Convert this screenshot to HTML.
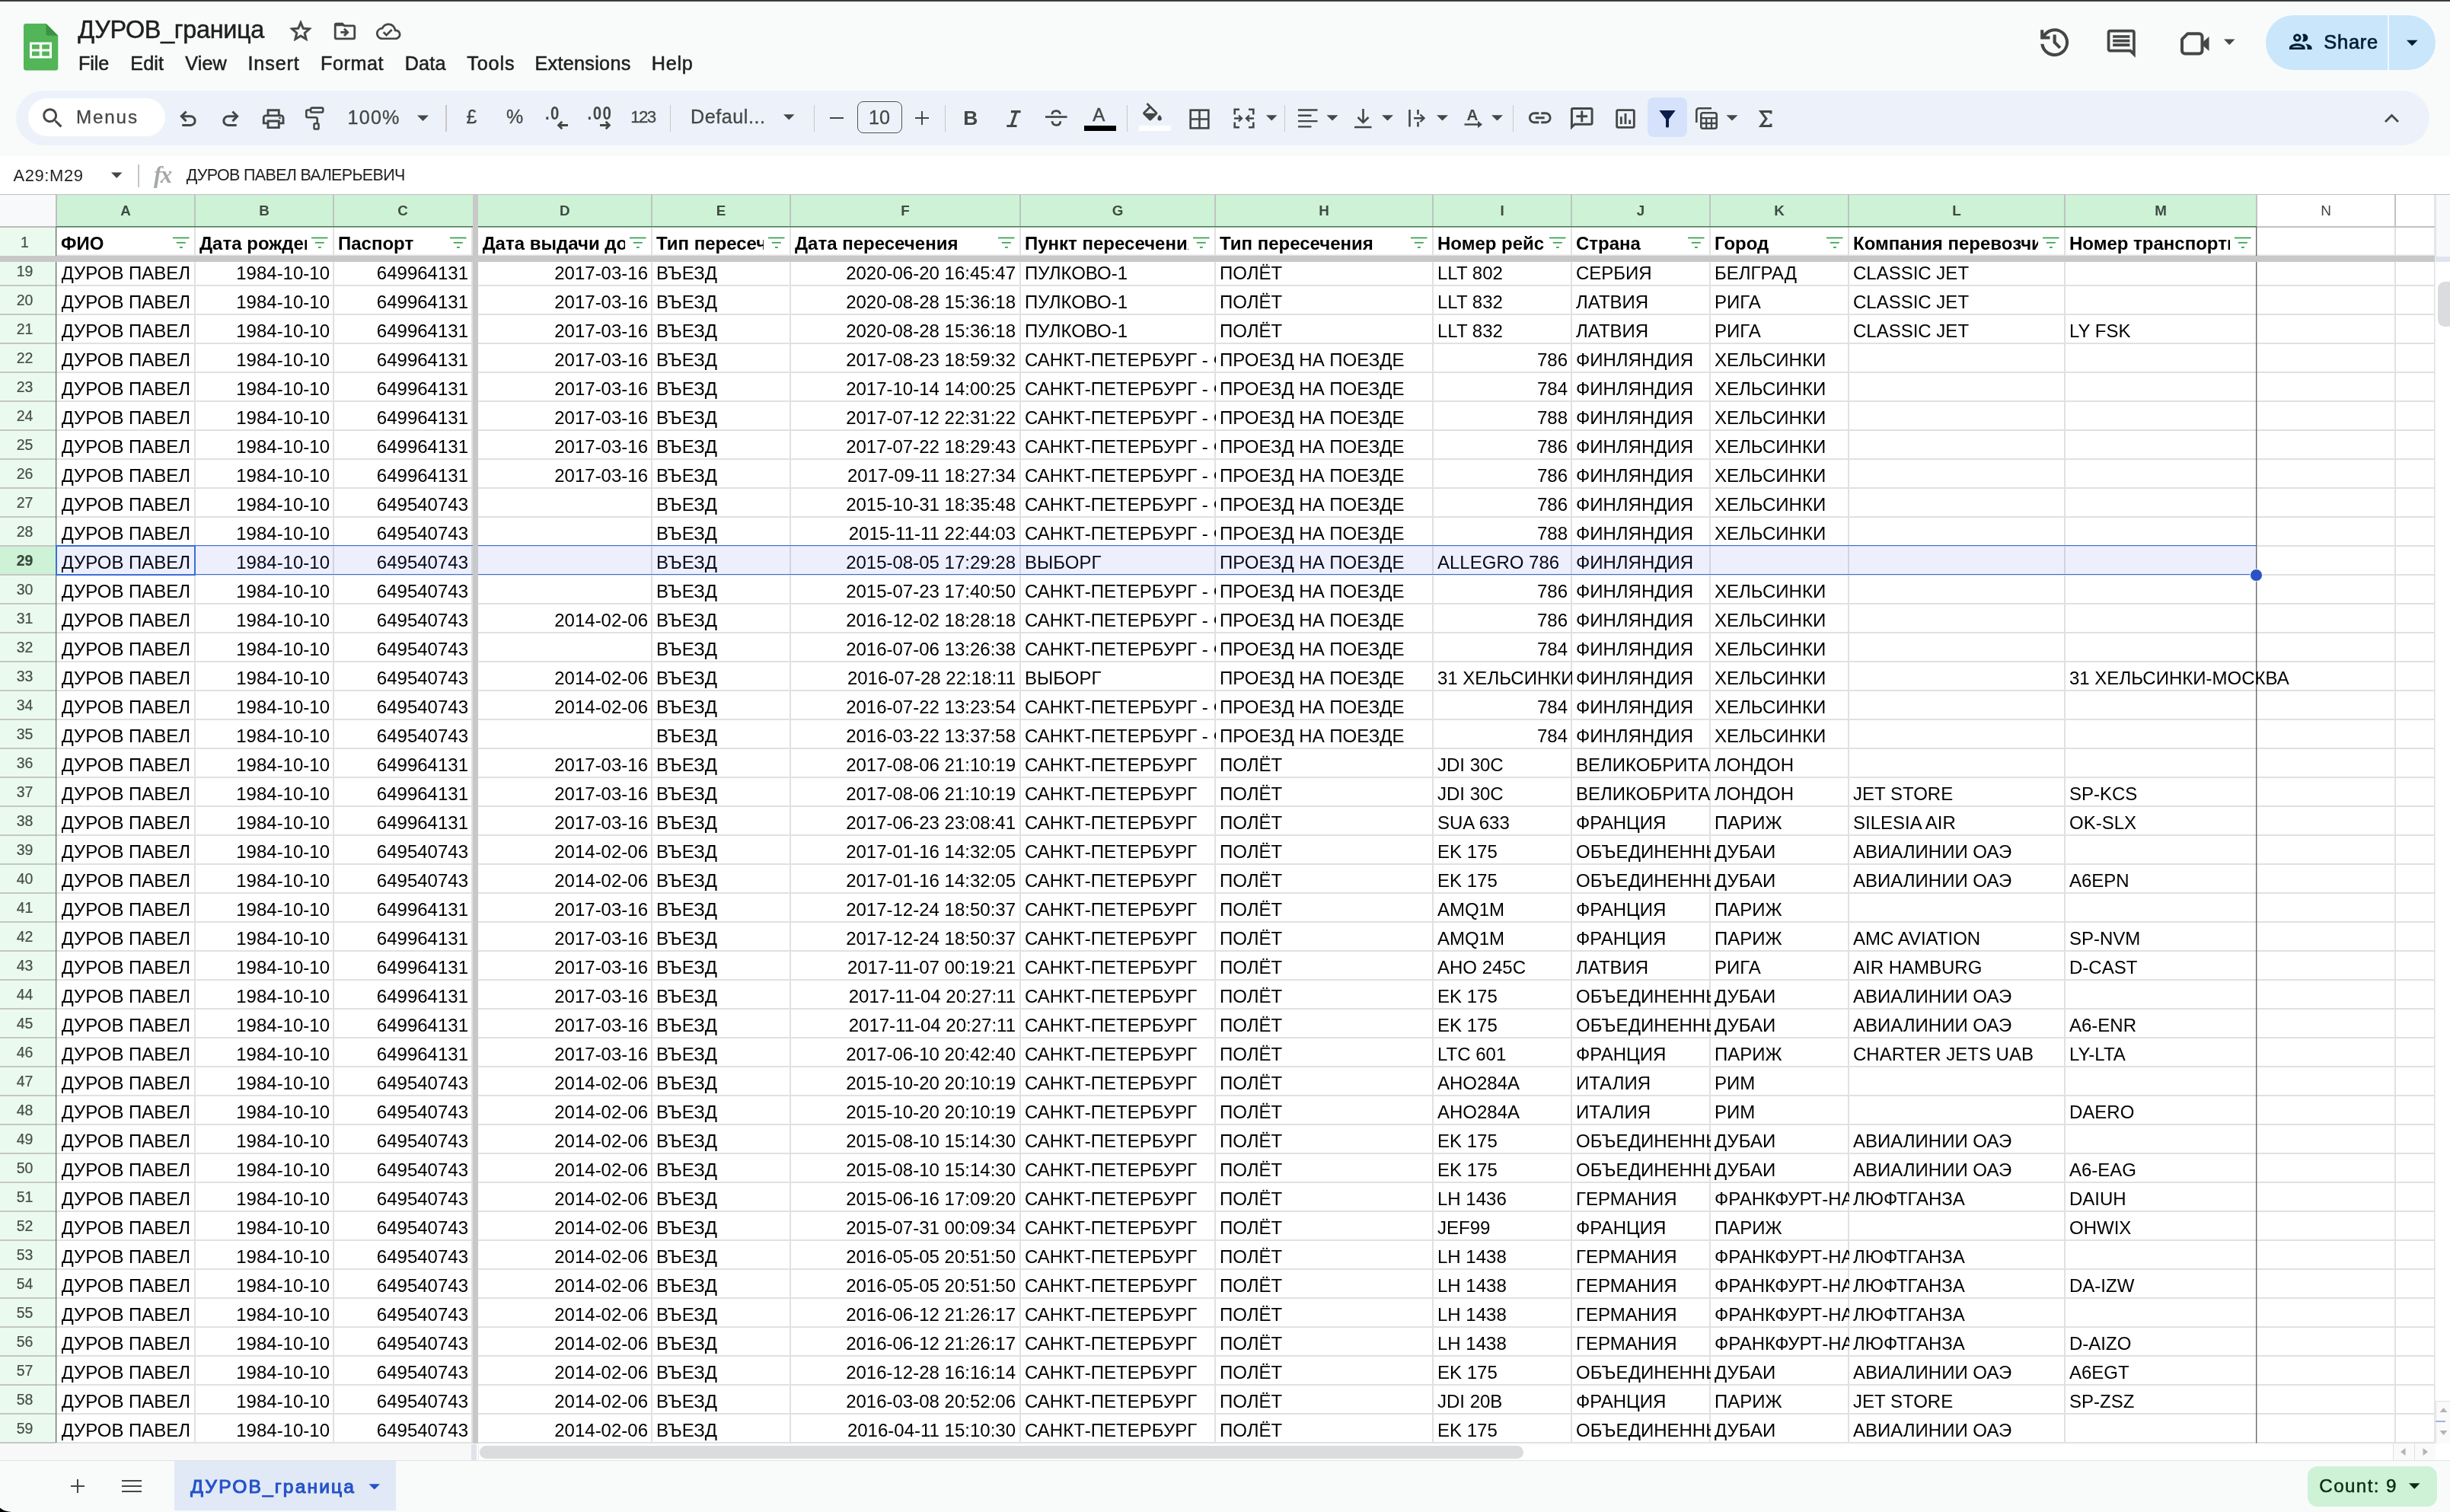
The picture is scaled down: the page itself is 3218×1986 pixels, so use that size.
<!DOCTYPE html><html><head><meta charset='utf-8'><title>ДУРОВ_граница - Google Sheets</title><style>
*{box-sizing:border-box;margin:0;padding:0}
html,body{width:3218px;height:1986px;overflow:hidden;background:#f9fbfb;font-family:"Liberation Sans",sans-serif;}
body{position:relative}
#root{position:absolute;left:0;top:0;width:3218px;height:1986px;overflow:hidden;will-change:transform}
.a{position:absolute}
.t{position:absolute;white-space:pre;line-height:1;}
.c{position:absolute;white-space:pre;overflow:hidden;font-size:24.0px;color:#000;height:36px;line-height:36px}
.r{text-align:right}
.rh{position:absolute;left:0;width:65px;text-align:center;font-size:19.5px;color:#444f46;height:36px;line-height:36px;-webkit-text-stroke:0.2px #444f46}
.ch{position:absolute;top:256.3px;height:41px;line-height:41px;text-align:center;font-size:18.8px;font-weight:bold;color:#3f4a42;}
.h1{position:absolute;white-space:pre;overflow:hidden;font-size:24.0px;font-weight:bold;color:#000;height:34px;line-height:34px;top:302.6px}
svg{position:absolute;overflow:visible}
</style></head><body><div id='root'>
<div class='a' style='left:0;top:205px;width:3218px;height:50px;background:#fff'></div>
<div class='a' style='left:0;top:255px;width:3198px;height:1640px;background:#fff'></div>
<div class='a' style='left:0;top:256px;width:73px;height:41px;background:#f8f9fa'></div>
<div class='a' style='left:75px;top:256px;width:2889px;height:41.5px;background:#cdf2d5'></div>
<div class='a' style='left:0;top:299px;width:73.5px;height:1596px;background:#ebfaef'></div>
<div class='a' style='left:0;top:717px;width:73.5px;height:38px;background:#cdf2d5'></div>
<svg class='a' style='left:0;top:0' width='3218' height='1986'><rect x='74' y='374' width='3124' height='2' fill='#e1e1e1'/><rect x='0' y='374' width='73' height='2' fill='#c4c7c5'/><rect x='74' y='412' width='3124' height='2' fill='#e1e1e1'/><rect x='0' y='412' width='73' height='2' fill='#c4c7c5'/><rect x='74' y='450' width='3124' height='2' fill='#e1e1e1'/><rect x='0' y='450' width='73' height='2' fill='#c4c7c5'/><rect x='74' y='488' width='3124' height='2' fill='#e1e1e1'/><rect x='0' y='488' width='73' height='2' fill='#c4c7c5'/><rect x='74' y='526' width='3124' height='2' fill='#e1e1e1'/><rect x='0' y='526' width='73' height='2' fill='#c4c7c5'/><rect x='74' y='564' width='3124' height='2' fill='#e1e1e1'/><rect x='0' y='564' width='73' height='2' fill='#c4c7c5'/><rect x='74' y='602' width='3124' height='2' fill='#e1e1e1'/><rect x='0' y='602' width='73' height='2' fill='#c4c7c5'/><rect x='74' y='640' width='3124' height='2' fill='#e1e1e1'/><rect x='0' y='640' width='73' height='2' fill='#c4c7c5'/><rect x='74' y='678' width='3124' height='2' fill='#e1e1e1'/><rect x='0' y='678' width='73' height='2' fill='#c4c7c5'/><rect x='74' y='716' width='3124' height='2' fill='#e1e1e1'/><rect x='0' y='716' width='73' height='2' fill='#c4c7c5'/><rect x='74' y='754' width='3124' height='2' fill='#e1e1e1'/><rect x='0' y='754' width='73' height='2' fill='#c4c7c5'/><rect x='74' y='792' width='3124' height='2' fill='#e1e1e1'/><rect x='0' y='792' width='73' height='2' fill='#c4c7c5'/><rect x='74' y='830' width='3124' height='2' fill='#e1e1e1'/><rect x='0' y='830' width='73' height='2' fill='#c4c7c5'/><rect x='74' y='868' width='3124' height='2' fill='#e1e1e1'/><rect x='0' y='868' width='73' height='2' fill='#c4c7c5'/><rect x='74' y='906' width='3124' height='2' fill='#e1e1e1'/><rect x='0' y='906' width='73' height='2' fill='#c4c7c5'/><rect x='74' y='944' width='3124' height='2' fill='#e1e1e1'/><rect x='0' y='944' width='73' height='2' fill='#c4c7c5'/><rect x='74' y='982' width='3124' height='2' fill='#e1e1e1'/><rect x='0' y='982' width='73' height='2' fill='#c4c7c5'/><rect x='74' y='1020' width='3124' height='2' fill='#e1e1e1'/><rect x='0' y='1020' width='73' height='2' fill='#c4c7c5'/><rect x='74' y='1058' width='3124' height='2' fill='#e1e1e1'/><rect x='0' y='1058' width='73' height='2' fill='#c4c7c5'/><rect x='74' y='1096' width='3124' height='2' fill='#e1e1e1'/><rect x='0' y='1096' width='73' height='2' fill='#c4c7c5'/><rect x='74' y='1134' width='3124' height='2' fill='#e1e1e1'/><rect x='0' y='1134' width='73' height='2' fill='#c4c7c5'/><rect x='74' y='1172' width='3124' height='2' fill='#e1e1e1'/><rect x='0' y='1172' width='73' height='2' fill='#c4c7c5'/><rect x='74' y='1210' width='3124' height='2' fill='#e1e1e1'/><rect x='0' y='1210' width='73' height='2' fill='#c4c7c5'/><rect x='74' y='1248' width='3124' height='2' fill='#e1e1e1'/><rect x='0' y='1248' width='73' height='2' fill='#c4c7c5'/><rect x='74' y='1286' width='3124' height='2' fill='#e1e1e1'/><rect x='0' y='1286' width='73' height='2' fill='#c4c7c5'/><rect x='74' y='1324' width='3124' height='2' fill='#e1e1e1'/><rect x='0' y='1324' width='73' height='2' fill='#c4c7c5'/><rect x='74' y='1362' width='3124' height='2' fill='#e1e1e1'/><rect x='0' y='1362' width='73' height='2' fill='#c4c7c5'/><rect x='74' y='1400' width='3124' height='2' fill='#e1e1e1'/><rect x='0' y='1400' width='73' height='2' fill='#c4c7c5'/><rect x='74' y='1438' width='3124' height='2' fill='#e1e1e1'/><rect x='0' y='1438' width='73' height='2' fill='#c4c7c5'/><rect x='74' y='1476' width='3124' height='2' fill='#e1e1e1'/><rect x='0' y='1476' width='73' height='2' fill='#c4c7c5'/><rect x='74' y='1514' width='3124' height='2' fill='#e1e1e1'/><rect x='0' y='1514' width='73' height='2' fill='#c4c7c5'/><rect x='74' y='1552' width='3124' height='2' fill='#e1e1e1'/><rect x='0' y='1552' width='73' height='2' fill='#c4c7c5'/><rect x='74' y='1590' width='3124' height='2' fill='#e1e1e1'/><rect x='0' y='1590' width='73' height='2' fill='#c4c7c5'/><rect x='74' y='1628' width='3124' height='2' fill='#e1e1e1'/><rect x='0' y='1628' width='73' height='2' fill='#c4c7c5'/><rect x='74' y='1666' width='3124' height='2' fill='#e1e1e1'/><rect x='0' y='1666' width='73' height='2' fill='#c4c7c5'/><rect x='74' y='1704' width='3124' height='2' fill='#e1e1e1'/><rect x='0' y='1704' width='73' height='2' fill='#c4c7c5'/><rect x='74' y='1742' width='3124' height='2' fill='#e1e1e1'/><rect x='0' y='1742' width='73' height='2' fill='#c4c7c5'/><rect x='74' y='1780' width='3124' height='2' fill='#e1e1e1'/><rect x='0' y='1780' width='73' height='2' fill='#c4c7c5'/><rect x='74' y='1818' width='3124' height='2' fill='#e1e1e1'/><rect x='0' y='1818' width='73' height='2' fill='#c4c7c5'/><rect x='74' y='1856' width='3124' height='2' fill='#e1e1e1'/><rect x='0' y='1856' width='73' height='2' fill='#c4c7c5'/><rect x='74' y='1894' width='3124' height='2' fill='#e1e1e1'/><rect x='0' y='1894' width='73' height='2' fill='#c4c7c5'/><rect x='74' y='334.5' width='3124' height='1.5' fill='#e1e1e1'/><rect x='255' y='299' width='2' height='1597' fill='#e1e1e1'/><rect x='437' y='299' width='2' height='1597' fill='#e1e1e1'/><rect x='619' y='299' width='2' height='1597' fill='#e1e1e1'/><rect x='855' y='299' width='2' height='1597' fill='#e1e1e1'/><rect x='1037' y='299' width='2' height='1597' fill='#e1e1e1'/><rect x='1339' y='299' width='2' height='1597' fill='#e1e1e1'/><rect x='1595' y='299' width='2' height='1597' fill='#e1e1e1'/><rect x='1881' y='299' width='2' height='1597' fill='#e1e1e1'/><rect x='2063' y='299' width='2' height='1597' fill='#e1e1e1'/><rect x='2245' y='299' width='2' height='1597' fill='#e1e1e1'/><rect x='2427' y='299' width='2' height='1597' fill='#e1e1e1'/><rect x='2711' y='299' width='2' height='1597' fill='#e1e1e1'/><rect x='3145' y='299' width='2' height='1597' fill='#e1e1e1'/><rect x='3197' y='256' width='1.5' height='1640' fill='#e1e1e1'/><rect x='255' y='256' width='2' height='42' fill='#c0c3c1'/><rect x='437' y='256' width='2' height='42' fill='#c0c3c1'/><rect x='855' y='256' width='2' height='42' fill='#c0c3c1'/><rect x='1037' y='256' width='2' height='42' fill='#c0c3c1'/><rect x='1339' y='256' width='2' height='42' fill='#c0c3c1'/><rect x='1595' y='256' width='2' height='42' fill='#c0c3c1'/><rect x='1881' y='256' width='2' height='42' fill='#c0c3c1'/><rect x='2063' y='256' width='2' height='42' fill='#c0c3c1'/><rect x='2245' y='256' width='2' height='42' fill='#c0c3c1'/><rect x='2427' y='256' width='2' height='42' fill='#c0c3c1'/><rect x='2711' y='256' width='2' height='42' fill='#c0c3c1'/><rect x='2963' y='256' width='2' height='42' fill='#c0c3c1'/><rect x='3145' y='256' width='2' height='42' fill='#c0c3c1'/><rect x='0' y='255' width='3218' height='1' fill='#c0c0c0'/><rect x='73' y='256' width='2' height='42' fill='#c0c0c0'/><rect x='0' y='297' width='74' height='2' fill='#bcbcbc'/><rect x='74' y='297' width='2890' height='1.6' fill='#4f7b5a'/><rect x='2964' y='297' width='234' height='2' fill='#c0c3c1'/><rect x='73' y='298' width='1.3' height='1597' fill='#5b7463'/><rect x='2963.1' y='298' width='1.25' height='1597.5' fill='#5a5a5a'/></svg>
<div class='c' style='left:80.5px;width:176.5px;top:340.5px'>ДУРОВ ПАВЕЛ ВАЛЕРЬЕВИЧ</div>
<div class='c r' style='left:257px;width:176.0px;top:340.5px'>1984-10-10</div>
<div class='c r' style='left:439px;width:176.0px;top:340.5px'>649964131</div>
<div class='c r' style='left:628.5px;width:222.5px;top:340.5px'>2017-03-16</div>
<div class='c' style='left:862.0px;width:177.0px;top:340.5px'>ВЪЕЗД</div>
<div class='c r' style='left:1039px;width:295.0px;top:340.5px'>2020-06-20 16:45:47</div>
<div class='c' style='left:1346.0px;width:251.0px;top:340.5px'>ПУЛКОВО-1</div>
<div class='c' style='left:1602.0px;width:281.0px;top:340.5px'>ПОЛЁТ</div>
<div class='c' style='left:1888.0px;width:177.0px;top:340.5px'>LLT 802</div>
<div class='c' style='left:2070.0px;width:177.0px;top:340.5px'>СЕРБИЯ</div>
<div class='c' style='left:2252.0px;width:177.0px;top:340.5px'>БЕЛГРАД</div>
<div class='c' style='left:2434.0px;width:279.0px;top:340.5px'>CLASSIC JET</div>
<div class='rh' style='top:338.2px;'>19</div>
<div class='c' style='left:80.5px;width:176.5px;top:378.5px'>ДУРОВ ПАВЕЛ ВАЛЕРЬЕВИЧ</div>
<div class='c r' style='left:257px;width:176.0px;top:378.5px'>1984-10-10</div>
<div class='c r' style='left:439px;width:176.0px;top:378.5px'>649964131</div>
<div class='c r' style='left:628.5px;width:222.5px;top:378.5px'>2017-03-16</div>
<div class='c' style='left:862.0px;width:177.0px;top:378.5px'>ВЪЕЗД</div>
<div class='c r' style='left:1039px;width:295.0px;top:378.5px'>2020-08-28 15:36:18</div>
<div class='c' style='left:1346.0px;width:251.0px;top:378.5px'>ПУЛКОВО-1</div>
<div class='c' style='left:1602.0px;width:281.0px;top:378.5px'>ПОЛЁТ</div>
<div class='c' style='left:1888.0px;width:177.0px;top:378.5px'>LLT 832</div>
<div class='c' style='left:2070.0px;width:177.0px;top:378.5px'>ЛАТВИЯ</div>
<div class='c' style='left:2252.0px;width:177.0px;top:378.5px'>РИГА</div>
<div class='c' style='left:2434.0px;width:279.0px;top:378.5px'>CLASSIC JET</div>
<div class='rh' style='top:376.2px;'>20</div>
<div class='c' style='left:80.5px;width:176.5px;top:416.5px'>ДУРОВ ПАВЕЛ ВАЛЕРЬЕВИЧ</div>
<div class='c r' style='left:257px;width:176.0px;top:416.5px'>1984-10-10</div>
<div class='c r' style='left:439px;width:176.0px;top:416.5px'>649964131</div>
<div class='c r' style='left:628.5px;width:222.5px;top:416.5px'>2017-03-16</div>
<div class='c' style='left:862.0px;width:177.0px;top:416.5px'>ВЪЕЗД</div>
<div class='c r' style='left:1039px;width:295.0px;top:416.5px'>2020-08-28 15:36:18</div>
<div class='c' style='left:1346.0px;width:251.0px;top:416.5px'>ПУЛКОВО-1</div>
<div class='c' style='left:1602.0px;width:281.0px;top:416.5px'>ПОЛЁТ</div>
<div class='c' style='left:1888.0px;width:177.0px;top:416.5px'>LLT 832</div>
<div class='c' style='left:2070.0px;width:177.0px;top:416.5px'>ЛАТВИЯ</div>
<div class='c' style='left:2252.0px;width:177.0px;top:416.5px'>РИГА</div>
<div class='c' style='left:2434.0px;width:279.0px;top:416.5px'>CLASSIC JET</div>
<div class='c' style='left:2718.0px;width:247.0px;top:416.5px'>LY FSK</div>
<div class='rh' style='top:414.2px;'>21</div>
<div class='c' style='left:80.5px;width:176.5px;top:454.5px'>ДУРОВ ПАВЕЛ ВАЛЕРЬЕВИЧ</div>
<div class='c r' style='left:257px;width:176.0px;top:454.5px'>1984-10-10</div>
<div class='c r' style='left:439px;width:176.0px;top:454.5px'>649964131</div>
<div class='c r' style='left:628.5px;width:222.5px;top:454.5px'>2017-03-16</div>
<div class='c' style='left:862.0px;width:177.0px;top:454.5px'>ВЪЕЗД</div>
<div class='c r' style='left:1039px;width:295.0px;top:454.5px'>2017-08-23 18:59:32</div>
<div class='c' style='left:1346.0px;width:251.0px;top:454.5px'>САНКТ-ПЕТЕРБУРГ - ФИНЛЯНДСКИЙ</div>
<div class='c' style='left:1602.0px;width:281.0px;top:454.5px'>ПРОЕЗД НА ПОЕЗДЕ</div>
<div class='c r' style='left:1883px;width:176.0px;top:454.5px'>786</div>
<div class='c' style='left:2070.0px;width:177.0px;top:454.5px'>ФИНЛЯНДИЯ</div>
<div class='c' style='left:2252.0px;width:177.0px;top:454.5px'>ХЕЛЬСИНКИ</div>
<div class='rh' style='top:452.2px;'>22</div>
<div class='c' style='left:80.5px;width:176.5px;top:492.5px'>ДУРОВ ПАВЕЛ ВАЛЕРЬЕВИЧ</div>
<div class='c r' style='left:257px;width:176.0px;top:492.5px'>1984-10-10</div>
<div class='c r' style='left:439px;width:176.0px;top:492.5px'>649964131</div>
<div class='c r' style='left:628.5px;width:222.5px;top:492.5px'>2017-03-16</div>
<div class='c' style='left:862.0px;width:177.0px;top:492.5px'>ВЪЕЗД</div>
<div class='c r' style='left:1039px;width:295.0px;top:492.5px'>2017-10-14 14:00:25</div>
<div class='c' style='left:1346.0px;width:251.0px;top:492.5px'>САНКТ-ПЕТЕРБУРГ - ФИНЛЯНДСКИЙ</div>
<div class='c' style='left:1602.0px;width:281.0px;top:492.5px'>ПРОЕЗД НА ПОЕЗДЕ</div>
<div class='c r' style='left:1883px;width:176.0px;top:492.5px'>784</div>
<div class='c' style='left:2070.0px;width:177.0px;top:492.5px'>ФИНЛЯНДИЯ</div>
<div class='c' style='left:2252.0px;width:177.0px;top:492.5px'>ХЕЛЬСИНКИ</div>
<div class='rh' style='top:490.2px;'>23</div>
<div class='c' style='left:80.5px;width:176.5px;top:530.5px'>ДУРОВ ПАВЕЛ ВАЛЕРЬЕВИЧ</div>
<div class='c r' style='left:257px;width:176.0px;top:530.5px'>1984-10-10</div>
<div class='c r' style='left:439px;width:176.0px;top:530.5px'>649964131</div>
<div class='c r' style='left:628.5px;width:222.5px;top:530.5px'>2017-03-16</div>
<div class='c' style='left:862.0px;width:177.0px;top:530.5px'>ВЪЕЗД</div>
<div class='c r' style='left:1039px;width:295.0px;top:530.5px'>2017-07-12 22:31:22</div>
<div class='c' style='left:1346.0px;width:251.0px;top:530.5px'>САНКТ-ПЕТЕРБУРГ - ФИНЛЯНДСКИЙ</div>
<div class='c' style='left:1602.0px;width:281.0px;top:530.5px'>ПРОЕЗД НА ПОЕЗДЕ</div>
<div class='c r' style='left:1883px;width:176.0px;top:530.5px'>788</div>
<div class='c' style='left:2070.0px;width:177.0px;top:530.5px'>ФИНЛЯНДИЯ</div>
<div class='c' style='left:2252.0px;width:177.0px;top:530.5px'>ХЕЛЬСИНКИ</div>
<div class='rh' style='top:528.2px;'>24</div>
<div class='c' style='left:80.5px;width:176.5px;top:568.5px'>ДУРОВ ПАВЕЛ ВАЛЕРЬЕВИЧ</div>
<div class='c r' style='left:257px;width:176.0px;top:568.5px'>1984-10-10</div>
<div class='c r' style='left:439px;width:176.0px;top:568.5px'>649964131</div>
<div class='c r' style='left:628.5px;width:222.5px;top:568.5px'>2017-03-16</div>
<div class='c' style='left:862.0px;width:177.0px;top:568.5px'>ВЪЕЗД</div>
<div class='c r' style='left:1039px;width:295.0px;top:568.5px'>2017-07-22 18:29:43</div>
<div class='c' style='left:1346.0px;width:251.0px;top:568.5px'>САНКТ-ПЕТЕРБУРГ - ФИНЛЯНДСКИЙ</div>
<div class='c' style='left:1602.0px;width:281.0px;top:568.5px'>ПРОЕЗД НА ПОЕЗДЕ</div>
<div class='c r' style='left:1883px;width:176.0px;top:568.5px'>786</div>
<div class='c' style='left:2070.0px;width:177.0px;top:568.5px'>ФИНЛЯНДИЯ</div>
<div class='c' style='left:2252.0px;width:177.0px;top:568.5px'>ХЕЛЬСИНКИ</div>
<div class='rh' style='top:566.2px;'>25</div>
<div class='c' style='left:80.5px;width:176.5px;top:606.5px'>ДУРОВ ПАВЕЛ ВАЛЕРЬЕВИЧ</div>
<div class='c r' style='left:257px;width:176.0px;top:606.5px'>1984-10-10</div>
<div class='c r' style='left:439px;width:176.0px;top:606.5px'>649964131</div>
<div class='c r' style='left:628.5px;width:222.5px;top:606.5px'>2017-03-16</div>
<div class='c' style='left:862.0px;width:177.0px;top:606.5px'>ВЪЕЗД</div>
<div class='c r' style='left:1039px;width:295.0px;top:606.5px'>2017-09-11 18:27:34</div>
<div class='c' style='left:1346.0px;width:251.0px;top:606.5px'>САНКТ-ПЕТЕРБУРГ - ФИНЛЯНДСКИЙ</div>
<div class='c' style='left:1602.0px;width:281.0px;top:606.5px'>ПРОЕЗД НА ПОЕЗДЕ</div>
<div class='c r' style='left:1883px;width:176.0px;top:606.5px'>786</div>
<div class='c' style='left:2070.0px;width:177.0px;top:606.5px'>ФИНЛЯНДИЯ</div>
<div class='c' style='left:2252.0px;width:177.0px;top:606.5px'>ХЕЛЬСИНКИ</div>
<div class='rh' style='top:604.2px;'>26</div>
<div class='c' style='left:80.5px;width:176.5px;top:644.5px'>ДУРОВ ПАВЕЛ ВАЛЕРЬЕВИЧ</div>
<div class='c r' style='left:257px;width:176.0px;top:644.5px'>1984-10-10</div>
<div class='c r' style='left:439px;width:176.0px;top:644.5px'>649540743</div>
<div class='c' style='left:862.0px;width:177.0px;top:644.5px'>ВЪЕЗД</div>
<div class='c r' style='left:1039px;width:295.0px;top:644.5px'>2015-10-31 18:35:48</div>
<div class='c' style='left:1346.0px;width:251.0px;top:644.5px'>САНКТ-ПЕТЕРБУРГ - ФИНЛЯНДСКИЙ</div>
<div class='c' style='left:1602.0px;width:281.0px;top:644.5px'>ПРОЕЗД НА ПОЕЗДЕ</div>
<div class='c r' style='left:1883px;width:176.0px;top:644.5px'>786</div>
<div class='c' style='left:2070.0px;width:177.0px;top:644.5px'>ФИНЛЯНДИЯ</div>
<div class='c' style='left:2252.0px;width:177.0px;top:644.5px'>ХЕЛЬСИНКИ</div>
<div class='rh' style='top:642.2px;'>27</div>
<div class='c' style='left:80.5px;width:176.5px;top:682.5px'>ДУРОВ ПАВЕЛ ВАЛЕРЬЕВИЧ</div>
<div class='c r' style='left:257px;width:176.0px;top:682.5px'>1984-10-10</div>
<div class='c r' style='left:439px;width:176.0px;top:682.5px'>649540743</div>
<div class='c' style='left:862.0px;width:177.0px;top:682.5px'>ВЪЕЗД</div>
<div class='c r' style='left:1039px;width:295.0px;top:682.5px'>2015-11-11 22:44:03</div>
<div class='c' style='left:1346.0px;width:251.0px;top:682.5px'>САНКТ-ПЕТЕРБУРГ - ФИНЛЯНДСКИЙ</div>
<div class='c' style='left:1602.0px;width:281.0px;top:682.5px'>ПРОЕЗД НА ПОЕЗДЕ</div>
<div class='c r' style='left:1883px;width:176.0px;top:682.5px'>788</div>
<div class='c' style='left:2070.0px;width:177.0px;top:682.5px'>ФИНЛЯНДИЯ</div>
<div class='c' style='left:2252.0px;width:177.0px;top:682.5px'>ХЕЛЬСИНКИ</div>
<div class='rh' style='top:680.2px;'>28</div>
<div class='c' style='left:80.5px;width:176.5px;top:720.5px'>ДУРОВ ПАВЕЛ ВАЛЕРЬЕВИЧ</div>
<div class='c r' style='left:257px;width:176.0px;top:720.5px'>1984-10-10</div>
<div class='c r' style='left:439px;width:176.0px;top:720.5px'>649540743</div>
<div class='c' style='left:862.0px;width:177.0px;top:720.5px'>ВЪЕЗД</div>
<div class='c r' style='left:1039px;width:295.0px;top:720.5px'>2015-08-05 17:29:28</div>
<div class='c' style='left:1346.0px;width:251.0px;top:720.5px'>ВЫБОРГ</div>
<div class='c' style='left:1602.0px;width:281.0px;top:720.5px'>ПРОЕЗД НА ПОЕЗДЕ</div>
<div class='c' style='left:1888.0px;width:177.0px;top:720.5px'>ALLEGRO 786</div>
<div class='c' style='left:2070.0px;width:177.0px;top:720.5px'>ФИНЛЯНДИЯ</div>
<div class='rh' style='top:718.2px;font-weight:bold;color:#39463c;'>29</div>
<div class='c' style='left:80.5px;width:176.5px;top:758.5px'>ДУРОВ ПАВЕЛ ВАЛЕРЬЕВИЧ</div>
<div class='c r' style='left:257px;width:176.0px;top:758.5px'>1984-10-10</div>
<div class='c r' style='left:439px;width:176.0px;top:758.5px'>649540743</div>
<div class='c' style='left:862.0px;width:177.0px;top:758.5px'>ВЪЕЗД</div>
<div class='c r' style='left:1039px;width:295.0px;top:758.5px'>2015-07-23 17:40:50</div>
<div class='c' style='left:1346.0px;width:251.0px;top:758.5px'>САНКТ-ПЕТЕРБУРГ - ФИНЛЯНДСКИЙ</div>
<div class='c' style='left:1602.0px;width:281.0px;top:758.5px'>ПРОЕЗД НА ПОЕЗДЕ</div>
<div class='c r' style='left:1883px;width:176.0px;top:758.5px'>786</div>
<div class='c' style='left:2070.0px;width:177.0px;top:758.5px'>ФИНЛЯНДИЯ</div>
<div class='c' style='left:2252.0px;width:177.0px;top:758.5px'>ХЕЛЬСИНКИ</div>
<div class='rh' style='top:756.2px;'>30</div>
<div class='c' style='left:80.5px;width:176.5px;top:796.5px'>ДУРОВ ПАВЕЛ ВАЛЕРЬЕВИЧ</div>
<div class='c r' style='left:257px;width:176.0px;top:796.5px'>1984-10-10</div>
<div class='c r' style='left:439px;width:176.0px;top:796.5px'>649540743</div>
<div class='c r' style='left:628.5px;width:222.5px;top:796.5px'>2014-02-06</div>
<div class='c' style='left:862.0px;width:177.0px;top:796.5px'>ВЪЕЗД</div>
<div class='c r' style='left:1039px;width:295.0px;top:796.5px'>2016-12-02 18:28:18</div>
<div class='c' style='left:1346.0px;width:251.0px;top:796.5px'>САНКТ-ПЕТЕРБУРГ - ФИНЛЯНДСКИЙ</div>
<div class='c' style='left:1602.0px;width:281.0px;top:796.5px'>ПРОЕЗД НА ПОЕЗДЕ</div>
<div class='c r' style='left:1883px;width:176.0px;top:796.5px'>786</div>
<div class='c' style='left:2070.0px;width:177.0px;top:796.5px'>ФИНЛЯНДИЯ</div>
<div class='c' style='left:2252.0px;width:177.0px;top:796.5px'>ХЕЛЬСИНКИ</div>
<div class='rh' style='top:794.2px;'>31</div>
<div class='c' style='left:80.5px;width:176.5px;top:834.5px'>ДУРОВ ПАВЕЛ ВАЛЕРЬЕВИЧ</div>
<div class='c r' style='left:257px;width:176.0px;top:834.5px'>1984-10-10</div>
<div class='c r' style='left:439px;width:176.0px;top:834.5px'>649540743</div>
<div class='c' style='left:862.0px;width:177.0px;top:834.5px'>ВЪЕЗД</div>
<div class='c r' style='left:1039px;width:295.0px;top:834.5px'>2016-07-06 13:26:38</div>
<div class='c' style='left:1346.0px;width:251.0px;top:834.5px'>САНКТ-ПЕТЕРБУРГ - ФИНЛЯНДСКИЙ</div>
<div class='c' style='left:1602.0px;width:281.0px;top:834.5px'>ПРОЕЗД НА ПОЕЗДЕ</div>
<div class='c r' style='left:1883px;width:176.0px;top:834.5px'>784</div>
<div class='c' style='left:2070.0px;width:177.0px;top:834.5px'>ФИНЛЯНДИЯ</div>
<div class='c' style='left:2252.0px;width:177.0px;top:834.5px'>ХЕЛЬСИНКИ</div>
<div class='rh' style='top:832.2px;'>32</div>
<div class='c' style='left:80.5px;width:176.5px;top:872.5px'>ДУРОВ ПАВЕЛ ВАЛЕРЬЕВИЧ</div>
<div class='c r' style='left:257px;width:176.0px;top:872.5px'>1984-10-10</div>
<div class='c r' style='left:439px;width:176.0px;top:872.5px'>649540743</div>
<div class='c r' style='left:628.5px;width:222.5px;top:872.5px'>2014-02-06</div>
<div class='c' style='left:862.0px;width:177.0px;top:872.5px'>ВЪЕЗД</div>
<div class='c r' style='left:1039px;width:295.0px;top:872.5px'>2016-07-28 22:18:11</div>
<div class='c' style='left:1346.0px;width:251.0px;top:872.5px'>ВЫБОРГ</div>
<div class='c' style='left:1602.0px;width:281.0px;top:872.5px'>ПРОЕЗД НА ПОЕЗДЕ</div>
<div class='c' style='left:1888.0px;width:177.0px;top:872.5px'>31 ХЕЛЬСИНКИ-МОСКВА</div>
<div class='c' style='left:2070.0px;width:177.0px;top:872.5px'>ФИНЛЯНДИЯ</div>
<div class='c' style='left:2252.0px;width:177.0px;top:872.5px'>ХЕЛЬСИНКИ</div>
<div class='c' style='left:2718.0px;top:872.5px'>31 ХЕЛЬСИНКИ-МОСКВА</div>
<div class='rh' style='top:870.2px;'>33</div>
<div class='c' style='left:80.5px;width:176.5px;top:910.5px'>ДУРОВ ПАВЕЛ ВАЛЕРЬЕВИЧ</div>
<div class='c r' style='left:257px;width:176.0px;top:910.5px'>1984-10-10</div>
<div class='c r' style='left:439px;width:176.0px;top:910.5px'>649540743</div>
<div class='c r' style='left:628.5px;width:222.5px;top:910.5px'>2014-02-06</div>
<div class='c' style='left:862.0px;width:177.0px;top:910.5px'>ВЪЕЗД</div>
<div class='c r' style='left:1039px;width:295.0px;top:910.5px'>2016-07-22 13:23:54</div>
<div class='c' style='left:1346.0px;width:251.0px;top:910.5px'>САНКТ-ПЕТЕРБУРГ - ФИНЛЯНДСКИЙ</div>
<div class='c' style='left:1602.0px;width:281.0px;top:910.5px'>ПРОЕЗД НА ПОЕЗДЕ</div>
<div class='c r' style='left:1883px;width:176.0px;top:910.5px'>784</div>
<div class='c' style='left:2070.0px;width:177.0px;top:910.5px'>ФИНЛЯНДИЯ</div>
<div class='c' style='left:2252.0px;width:177.0px;top:910.5px'>ХЕЛЬСИНКИ</div>
<div class='rh' style='top:908.2px;'>34</div>
<div class='c' style='left:80.5px;width:176.5px;top:948.5px'>ДУРОВ ПАВЕЛ ВАЛЕРЬЕВИЧ</div>
<div class='c r' style='left:257px;width:176.0px;top:948.5px'>1984-10-10</div>
<div class='c r' style='left:439px;width:176.0px;top:948.5px'>649540743</div>
<div class='c' style='left:862.0px;width:177.0px;top:948.5px'>ВЪЕЗД</div>
<div class='c r' style='left:1039px;width:295.0px;top:948.5px'>2016-03-22 13:37:58</div>
<div class='c' style='left:1346.0px;width:251.0px;top:948.5px'>САНКТ-ПЕТЕРБУРГ - ФИНЛЯНДСКИЙ</div>
<div class='c' style='left:1602.0px;width:281.0px;top:948.5px'>ПРОЕЗД НА ПОЕЗДЕ</div>
<div class='c r' style='left:1883px;width:176.0px;top:948.5px'>784</div>
<div class='c' style='left:2070.0px;width:177.0px;top:948.5px'>ФИНЛЯНДИЯ</div>
<div class='c' style='left:2252.0px;width:177.0px;top:948.5px'>ХЕЛЬСИНКИ</div>
<div class='rh' style='top:946.2px;'>35</div>
<div class='c' style='left:80.5px;width:176.5px;top:986.5px'>ДУРОВ ПАВЕЛ ВАЛЕРЬЕВИЧ</div>
<div class='c r' style='left:257px;width:176.0px;top:986.5px'>1984-10-10</div>
<div class='c r' style='left:439px;width:176.0px;top:986.5px'>649964131</div>
<div class='c r' style='left:628.5px;width:222.5px;top:986.5px'>2017-03-16</div>
<div class='c' style='left:862.0px;width:177.0px;top:986.5px'>ВЪЕЗД</div>
<div class='c r' style='left:1039px;width:295.0px;top:986.5px'>2017-08-06 21:10:19</div>
<div class='c' style='left:1346.0px;width:251.0px;top:986.5px'>САНКТ-ПЕТЕРБУРГ</div>
<div class='c' style='left:1602.0px;width:281.0px;top:986.5px'>ПОЛЁТ</div>
<div class='c' style='left:1888.0px;width:177.0px;top:986.5px'>JDI 30C</div>
<div class='c' style='left:2070.0px;width:177.0px;top:986.5px'>ВЕЛИКОБРИТАНИЯ</div>
<div class='c' style='left:2252.0px;width:177.0px;top:986.5px'>ЛОНДОН</div>
<div class='rh' style='top:984.2px;'>36</div>
<div class='c' style='left:80.5px;width:176.5px;top:1024.5px'>ДУРОВ ПАВЕЛ ВАЛЕРЬЕВИЧ</div>
<div class='c r' style='left:257px;width:176.0px;top:1024.5px'>1984-10-10</div>
<div class='c r' style='left:439px;width:176.0px;top:1024.5px'>649964131</div>
<div class='c r' style='left:628.5px;width:222.5px;top:1024.5px'>2017-03-16</div>
<div class='c' style='left:862.0px;width:177.0px;top:1024.5px'>ВЪЕЗД</div>
<div class='c r' style='left:1039px;width:295.0px;top:1024.5px'>2017-08-06 21:10:19</div>
<div class='c' style='left:1346.0px;width:251.0px;top:1024.5px'>САНКТ-ПЕТЕРБУРГ</div>
<div class='c' style='left:1602.0px;width:281.0px;top:1024.5px'>ПОЛЁТ</div>
<div class='c' style='left:1888.0px;width:177.0px;top:1024.5px'>JDI 30C</div>
<div class='c' style='left:2070.0px;width:177.0px;top:1024.5px'>ВЕЛИКОБРИТАНИЯ</div>
<div class='c' style='left:2252.0px;width:177.0px;top:1024.5px'>ЛОНДОН</div>
<div class='c' style='left:2434.0px;width:279.0px;top:1024.5px'>JET STORE</div>
<div class='c' style='left:2718.0px;width:247.0px;top:1024.5px'>SP-KCS</div>
<div class='rh' style='top:1022.2px;'>37</div>
<div class='c' style='left:80.5px;width:176.5px;top:1062.5px'>ДУРОВ ПАВЕЛ ВАЛЕРЬЕВИЧ</div>
<div class='c r' style='left:257px;width:176.0px;top:1062.5px'>1984-10-10</div>
<div class='c r' style='left:439px;width:176.0px;top:1062.5px'>649964131</div>
<div class='c r' style='left:628.5px;width:222.5px;top:1062.5px'>2017-03-16</div>
<div class='c' style='left:862.0px;width:177.0px;top:1062.5px'>ВЪЕЗД</div>
<div class='c r' style='left:1039px;width:295.0px;top:1062.5px'>2017-06-23 23:08:41</div>
<div class='c' style='left:1346.0px;width:251.0px;top:1062.5px'>САНКТ-ПЕТЕРБУРГ</div>
<div class='c' style='left:1602.0px;width:281.0px;top:1062.5px'>ПОЛЁТ</div>
<div class='c' style='left:1888.0px;width:177.0px;top:1062.5px'>SUA 633</div>
<div class='c' style='left:2070.0px;width:177.0px;top:1062.5px'>ФРАНЦИЯ</div>
<div class='c' style='left:2252.0px;width:177.0px;top:1062.5px'>ПАРИЖ</div>
<div class='c' style='left:2434.0px;width:279.0px;top:1062.5px'>SILESIA AIR</div>
<div class='c' style='left:2718.0px;width:247.0px;top:1062.5px'>OK-SLX</div>
<div class='rh' style='top:1060.2px;'>38</div>
<div class='c' style='left:80.5px;width:176.5px;top:1100.5px'>ДУРОВ ПАВЕЛ ВАЛЕРЬЕВИЧ</div>
<div class='c r' style='left:257px;width:176.0px;top:1100.5px'>1984-10-10</div>
<div class='c r' style='left:439px;width:176.0px;top:1100.5px'>649540743</div>
<div class='c r' style='left:628.5px;width:222.5px;top:1100.5px'>2014-02-06</div>
<div class='c' style='left:862.0px;width:177.0px;top:1100.5px'>ВЪЕЗД</div>
<div class='c r' style='left:1039px;width:295.0px;top:1100.5px'>2017-01-16 14:32:05</div>
<div class='c' style='left:1346.0px;width:251.0px;top:1100.5px'>САНКТ-ПЕТЕРБУРГ</div>
<div class='c' style='left:1602.0px;width:281.0px;top:1100.5px'>ПОЛЁТ</div>
<div class='c' style='left:1888.0px;width:177.0px;top:1100.5px'>EK 175</div>
<div class='c' style='left:2070.0px;width:177.0px;top:1100.5px'>ОБЪЕДИНЕННЫЕ АРАБСКИЕ ЭМИРАТЫ</div>
<div class='c' style='left:2252.0px;width:177.0px;top:1100.5px'>ДУБАИ</div>
<div class='c' style='left:2434.0px;width:279.0px;top:1100.5px'>АВИАЛИНИИ ОАЭ</div>
<div class='rh' style='top:1098.2px;'>39</div>
<div class='c' style='left:80.5px;width:176.5px;top:1138.5px'>ДУРОВ ПАВЕЛ ВАЛЕРЬЕВИЧ</div>
<div class='c r' style='left:257px;width:176.0px;top:1138.5px'>1984-10-10</div>
<div class='c r' style='left:439px;width:176.0px;top:1138.5px'>649540743</div>
<div class='c r' style='left:628.5px;width:222.5px;top:1138.5px'>2014-02-06</div>
<div class='c' style='left:862.0px;width:177.0px;top:1138.5px'>ВЪЕЗД</div>
<div class='c r' style='left:1039px;width:295.0px;top:1138.5px'>2017-01-16 14:32:05</div>
<div class='c' style='left:1346.0px;width:251.0px;top:1138.5px'>САНКТ-ПЕТЕРБУРГ</div>
<div class='c' style='left:1602.0px;width:281.0px;top:1138.5px'>ПОЛЁТ</div>
<div class='c' style='left:1888.0px;width:177.0px;top:1138.5px'>EK 175</div>
<div class='c' style='left:2070.0px;width:177.0px;top:1138.5px'>ОБЪЕДИНЕННЫЕ АРАБСКИЕ ЭМИРАТЫ</div>
<div class='c' style='left:2252.0px;width:177.0px;top:1138.5px'>ДУБАИ</div>
<div class='c' style='left:2434.0px;width:279.0px;top:1138.5px'>АВИАЛИНИИ ОАЭ</div>
<div class='c' style='left:2718.0px;width:247.0px;top:1138.5px'>A6EPN</div>
<div class='rh' style='top:1136.2px;'>40</div>
<div class='c' style='left:80.5px;width:176.5px;top:1176.5px'>ДУРОВ ПАВЕЛ ВАЛЕРЬЕВИЧ</div>
<div class='c r' style='left:257px;width:176.0px;top:1176.5px'>1984-10-10</div>
<div class='c r' style='left:439px;width:176.0px;top:1176.5px'>649964131</div>
<div class='c r' style='left:628.5px;width:222.5px;top:1176.5px'>2017-03-16</div>
<div class='c' style='left:862.0px;width:177.0px;top:1176.5px'>ВЪЕЗД</div>
<div class='c r' style='left:1039px;width:295.0px;top:1176.5px'>2017-12-24 18:50:37</div>
<div class='c' style='left:1346.0px;width:251.0px;top:1176.5px'>САНКТ-ПЕТЕРБУРГ</div>
<div class='c' style='left:1602.0px;width:281.0px;top:1176.5px'>ПОЛЁТ</div>
<div class='c' style='left:1888.0px;width:177.0px;top:1176.5px'>AMQ1M</div>
<div class='c' style='left:2070.0px;width:177.0px;top:1176.5px'>ФРАНЦИЯ</div>
<div class='c' style='left:2252.0px;width:177.0px;top:1176.5px'>ПАРИЖ</div>
<div class='rh' style='top:1174.2px;'>41</div>
<div class='c' style='left:80.5px;width:176.5px;top:1214.5px'>ДУРОВ ПАВЕЛ ВАЛЕРЬЕВИЧ</div>
<div class='c r' style='left:257px;width:176.0px;top:1214.5px'>1984-10-10</div>
<div class='c r' style='left:439px;width:176.0px;top:1214.5px'>649964131</div>
<div class='c r' style='left:628.5px;width:222.5px;top:1214.5px'>2017-03-16</div>
<div class='c' style='left:862.0px;width:177.0px;top:1214.5px'>ВЪЕЗД</div>
<div class='c r' style='left:1039px;width:295.0px;top:1214.5px'>2017-12-24 18:50:37</div>
<div class='c' style='left:1346.0px;width:251.0px;top:1214.5px'>САНКТ-ПЕТЕРБУРГ</div>
<div class='c' style='left:1602.0px;width:281.0px;top:1214.5px'>ПОЛЁТ</div>
<div class='c' style='left:1888.0px;width:177.0px;top:1214.5px'>AMQ1M</div>
<div class='c' style='left:2070.0px;width:177.0px;top:1214.5px'>ФРАНЦИЯ</div>
<div class='c' style='left:2252.0px;width:177.0px;top:1214.5px'>ПАРИЖ</div>
<div class='c' style='left:2434.0px;width:279.0px;top:1214.5px'>AMC AVIATION</div>
<div class='c' style='left:2718.0px;width:247.0px;top:1214.5px'>SP-NVM</div>
<div class='rh' style='top:1212.2px;'>42</div>
<div class='c' style='left:80.5px;width:176.5px;top:1252.5px'>ДУРОВ ПАВЕЛ ВАЛЕРЬЕВИЧ</div>
<div class='c r' style='left:257px;width:176.0px;top:1252.5px'>1984-10-10</div>
<div class='c r' style='left:439px;width:176.0px;top:1252.5px'>649964131</div>
<div class='c r' style='left:628.5px;width:222.5px;top:1252.5px'>2017-03-16</div>
<div class='c' style='left:862.0px;width:177.0px;top:1252.5px'>ВЪЕЗД</div>
<div class='c r' style='left:1039px;width:295.0px;top:1252.5px'>2017-11-07 00:19:21</div>
<div class='c' style='left:1346.0px;width:251.0px;top:1252.5px'>САНКТ-ПЕТЕРБУРГ</div>
<div class='c' style='left:1602.0px;width:281.0px;top:1252.5px'>ПОЛЁТ</div>
<div class='c' style='left:1888.0px;width:177.0px;top:1252.5px'>AHO 245C</div>
<div class='c' style='left:2070.0px;width:177.0px;top:1252.5px'>ЛАТВИЯ</div>
<div class='c' style='left:2252.0px;width:177.0px;top:1252.5px'>РИГА</div>
<div class='c' style='left:2434.0px;width:279.0px;top:1252.5px'>AIR HAMBURG</div>
<div class='c' style='left:2718.0px;width:247.0px;top:1252.5px'>D-CAST</div>
<div class='rh' style='top:1250.2px;'>43</div>
<div class='c' style='left:80.5px;width:176.5px;top:1290.5px'>ДУРОВ ПАВЕЛ ВАЛЕРЬЕВИЧ</div>
<div class='c r' style='left:257px;width:176.0px;top:1290.5px'>1984-10-10</div>
<div class='c r' style='left:439px;width:176.0px;top:1290.5px'>649964131</div>
<div class='c r' style='left:628.5px;width:222.5px;top:1290.5px'>2017-03-16</div>
<div class='c' style='left:862.0px;width:177.0px;top:1290.5px'>ВЪЕЗД</div>
<div class='c r' style='left:1039px;width:295.0px;top:1290.5px'>2017-11-04 20:27:11</div>
<div class='c' style='left:1346.0px;width:251.0px;top:1290.5px'>САНКТ-ПЕТЕРБУРГ</div>
<div class='c' style='left:1602.0px;width:281.0px;top:1290.5px'>ПОЛЁТ</div>
<div class='c' style='left:1888.0px;width:177.0px;top:1290.5px'>EK 175</div>
<div class='c' style='left:2070.0px;width:177.0px;top:1290.5px'>ОБЪЕДИНЕННЫЕ АРАБСКИЕ ЭМИРАТЫ</div>
<div class='c' style='left:2252.0px;width:177.0px;top:1290.5px'>ДУБАИ</div>
<div class='c' style='left:2434.0px;width:279.0px;top:1290.5px'>АВИАЛИНИИ ОАЭ</div>
<div class='rh' style='top:1288.2px;'>44</div>
<div class='c' style='left:80.5px;width:176.5px;top:1328.5px'>ДУРОВ ПАВЕЛ ВАЛЕРЬЕВИЧ</div>
<div class='c r' style='left:257px;width:176.0px;top:1328.5px'>1984-10-10</div>
<div class='c r' style='left:439px;width:176.0px;top:1328.5px'>649964131</div>
<div class='c r' style='left:628.5px;width:222.5px;top:1328.5px'>2017-03-16</div>
<div class='c' style='left:862.0px;width:177.0px;top:1328.5px'>ВЪЕЗД</div>
<div class='c r' style='left:1039px;width:295.0px;top:1328.5px'>2017-11-04 20:27:11</div>
<div class='c' style='left:1346.0px;width:251.0px;top:1328.5px'>САНКТ-ПЕТЕРБУРГ</div>
<div class='c' style='left:1602.0px;width:281.0px;top:1328.5px'>ПОЛЁТ</div>
<div class='c' style='left:1888.0px;width:177.0px;top:1328.5px'>EK 175</div>
<div class='c' style='left:2070.0px;width:177.0px;top:1328.5px'>ОБЪЕДИНЕННЫЕ АРАБСКИЕ ЭМИРАТЫ</div>
<div class='c' style='left:2252.0px;width:177.0px;top:1328.5px'>ДУБАИ</div>
<div class='c' style='left:2434.0px;width:279.0px;top:1328.5px'>АВИАЛИНИИ ОАЭ</div>
<div class='c' style='left:2718.0px;width:247.0px;top:1328.5px'>A6-ENR</div>
<div class='rh' style='top:1326.2px;'>45</div>
<div class='c' style='left:80.5px;width:176.5px;top:1366.5px'>ДУРОВ ПАВЕЛ ВАЛЕРЬЕВИЧ</div>
<div class='c r' style='left:257px;width:176.0px;top:1366.5px'>1984-10-10</div>
<div class='c r' style='left:439px;width:176.0px;top:1366.5px'>649964131</div>
<div class='c r' style='left:628.5px;width:222.5px;top:1366.5px'>2017-03-16</div>
<div class='c' style='left:862.0px;width:177.0px;top:1366.5px'>ВЪЕЗД</div>
<div class='c r' style='left:1039px;width:295.0px;top:1366.5px'>2017-06-10 20:42:40</div>
<div class='c' style='left:1346.0px;width:251.0px;top:1366.5px'>САНКТ-ПЕТЕРБУРГ</div>
<div class='c' style='left:1602.0px;width:281.0px;top:1366.5px'>ПОЛЁТ</div>
<div class='c' style='left:1888.0px;width:177.0px;top:1366.5px'>LTC 601</div>
<div class='c' style='left:2070.0px;width:177.0px;top:1366.5px'>ФРАНЦИЯ</div>
<div class='c' style='left:2252.0px;width:177.0px;top:1366.5px'>ПАРИЖ</div>
<div class='c' style='left:2434.0px;width:279.0px;top:1366.5px'>CHARTER JETS UAB</div>
<div class='c' style='left:2718.0px;width:247.0px;top:1366.5px'>LY-LTA</div>
<div class='rh' style='top:1364.2px;'>46</div>
<div class='c' style='left:80.5px;width:176.5px;top:1404.5px'>ДУРОВ ПАВЕЛ ВАЛЕРЬЕВИЧ</div>
<div class='c r' style='left:257px;width:176.0px;top:1404.5px'>1984-10-10</div>
<div class='c r' style='left:439px;width:176.0px;top:1404.5px'>649540743</div>
<div class='c r' style='left:628.5px;width:222.5px;top:1404.5px'>2014-02-06</div>
<div class='c' style='left:862.0px;width:177.0px;top:1404.5px'>ВЪЕЗД</div>
<div class='c r' style='left:1039px;width:295.0px;top:1404.5px'>2015-10-20 20:10:19</div>
<div class='c' style='left:1346.0px;width:251.0px;top:1404.5px'>САНКТ-ПЕТЕРБУРГ</div>
<div class='c' style='left:1602.0px;width:281.0px;top:1404.5px'>ПОЛЁТ</div>
<div class='c' style='left:1888.0px;width:177.0px;top:1404.5px'>AHO284A</div>
<div class='c' style='left:2070.0px;width:177.0px;top:1404.5px'>ИТАЛИЯ</div>
<div class='c' style='left:2252.0px;width:177.0px;top:1404.5px'>РИМ</div>
<div class='rh' style='top:1402.2px;'>47</div>
<div class='c' style='left:80.5px;width:176.5px;top:1442.5px'>ДУРОВ ПАВЕЛ ВАЛЕРЬЕВИЧ</div>
<div class='c r' style='left:257px;width:176.0px;top:1442.5px'>1984-10-10</div>
<div class='c r' style='left:439px;width:176.0px;top:1442.5px'>649540743</div>
<div class='c r' style='left:628.5px;width:222.5px;top:1442.5px'>2014-02-06</div>
<div class='c' style='left:862.0px;width:177.0px;top:1442.5px'>ВЪЕЗД</div>
<div class='c r' style='left:1039px;width:295.0px;top:1442.5px'>2015-10-20 20:10:19</div>
<div class='c' style='left:1346.0px;width:251.0px;top:1442.5px'>САНКТ-ПЕТЕРБУРГ</div>
<div class='c' style='left:1602.0px;width:281.0px;top:1442.5px'>ПОЛЁТ</div>
<div class='c' style='left:1888.0px;width:177.0px;top:1442.5px'>AHO284A</div>
<div class='c' style='left:2070.0px;width:177.0px;top:1442.5px'>ИТАЛИЯ</div>
<div class='c' style='left:2252.0px;width:177.0px;top:1442.5px'>РИМ</div>
<div class='c' style='left:2718.0px;width:247.0px;top:1442.5px'>DAERO</div>
<div class='rh' style='top:1440.2px;'>48</div>
<div class='c' style='left:80.5px;width:176.5px;top:1480.5px'>ДУРОВ ПАВЕЛ ВАЛЕРЬЕВИЧ</div>
<div class='c r' style='left:257px;width:176.0px;top:1480.5px'>1984-10-10</div>
<div class='c r' style='left:439px;width:176.0px;top:1480.5px'>649540743</div>
<div class='c r' style='left:628.5px;width:222.5px;top:1480.5px'>2014-02-06</div>
<div class='c' style='left:862.0px;width:177.0px;top:1480.5px'>ВЪЕЗД</div>
<div class='c r' style='left:1039px;width:295.0px;top:1480.5px'>2015-08-10 15:14:30</div>
<div class='c' style='left:1346.0px;width:251.0px;top:1480.5px'>САНКТ-ПЕТЕРБУРГ</div>
<div class='c' style='left:1602.0px;width:281.0px;top:1480.5px'>ПОЛЁТ</div>
<div class='c' style='left:1888.0px;width:177.0px;top:1480.5px'>EK 175</div>
<div class='c' style='left:2070.0px;width:177.0px;top:1480.5px'>ОБЪЕДИНЕННЫЕ АРАБСКИЕ ЭМИРАТЫ</div>
<div class='c' style='left:2252.0px;width:177.0px;top:1480.5px'>ДУБАИ</div>
<div class='c' style='left:2434.0px;width:279.0px;top:1480.5px'>АВИАЛИНИИ ОАЭ</div>
<div class='rh' style='top:1478.2px;'>49</div>
<div class='c' style='left:80.5px;width:176.5px;top:1518.5px'>ДУРОВ ПАВЕЛ ВАЛЕРЬЕВИЧ</div>
<div class='c r' style='left:257px;width:176.0px;top:1518.5px'>1984-10-10</div>
<div class='c r' style='left:439px;width:176.0px;top:1518.5px'>649540743</div>
<div class='c r' style='left:628.5px;width:222.5px;top:1518.5px'>2014-02-06</div>
<div class='c' style='left:862.0px;width:177.0px;top:1518.5px'>ВЪЕЗД</div>
<div class='c r' style='left:1039px;width:295.0px;top:1518.5px'>2015-08-10 15:14:30</div>
<div class='c' style='left:1346.0px;width:251.0px;top:1518.5px'>САНКТ-ПЕТЕРБУРГ</div>
<div class='c' style='left:1602.0px;width:281.0px;top:1518.5px'>ПОЛЁТ</div>
<div class='c' style='left:1888.0px;width:177.0px;top:1518.5px'>EK 175</div>
<div class='c' style='left:2070.0px;width:177.0px;top:1518.5px'>ОБЪЕДИНЕННЫЕ АРАБСКИЕ ЭМИРАТЫ</div>
<div class='c' style='left:2252.0px;width:177.0px;top:1518.5px'>ДУБАИ</div>
<div class='c' style='left:2434.0px;width:279.0px;top:1518.5px'>АВИАЛИНИИ ОАЭ</div>
<div class='c' style='left:2718.0px;width:247.0px;top:1518.5px'>A6-EAG</div>
<div class='rh' style='top:1516.2px;'>50</div>
<div class='c' style='left:80.5px;width:176.5px;top:1556.5px'>ДУРОВ ПАВЕЛ ВАЛЕРЬЕВИЧ</div>
<div class='c r' style='left:257px;width:176.0px;top:1556.5px'>1984-10-10</div>
<div class='c r' style='left:439px;width:176.0px;top:1556.5px'>649540743</div>
<div class='c r' style='left:628.5px;width:222.5px;top:1556.5px'>2014-02-06</div>
<div class='c' style='left:862.0px;width:177.0px;top:1556.5px'>ВЪЕЗД</div>
<div class='c r' style='left:1039px;width:295.0px;top:1556.5px'>2015-06-16 17:09:20</div>
<div class='c' style='left:1346.0px;width:251.0px;top:1556.5px'>САНКТ-ПЕТЕРБУРГ</div>
<div class='c' style='left:1602.0px;width:281.0px;top:1556.5px'>ПОЛЁТ</div>
<div class='c' style='left:1888.0px;width:177.0px;top:1556.5px'>LH 1436</div>
<div class='c' style='left:2070.0px;width:177.0px;top:1556.5px'>ГЕРМАНИЯ</div>
<div class='c' style='left:2252.0px;width:177.0px;top:1556.5px'>ФРАНКФУРТ-НА-МАЙНЕ</div>
<div class='c' style='left:2434.0px;width:279.0px;top:1556.5px'>ЛЮФТГАНЗА</div>
<div class='c' style='left:2718.0px;width:247.0px;top:1556.5px'>DAIUH</div>
<div class='rh' style='top:1554.2px;'>51</div>
<div class='c' style='left:80.5px;width:176.5px;top:1594.5px'>ДУРОВ ПАВЕЛ ВАЛЕРЬЕВИЧ</div>
<div class='c r' style='left:257px;width:176.0px;top:1594.5px'>1984-10-10</div>
<div class='c r' style='left:439px;width:176.0px;top:1594.5px'>649540743</div>
<div class='c r' style='left:628.5px;width:222.5px;top:1594.5px'>2014-02-06</div>
<div class='c' style='left:862.0px;width:177.0px;top:1594.5px'>ВЪЕЗД</div>
<div class='c r' style='left:1039px;width:295.0px;top:1594.5px'>2015-07-31 00:09:34</div>
<div class='c' style='left:1346.0px;width:251.0px;top:1594.5px'>САНКТ-ПЕТЕРБУРГ</div>
<div class='c' style='left:1602.0px;width:281.0px;top:1594.5px'>ПОЛЁТ</div>
<div class='c' style='left:1888.0px;width:177.0px;top:1594.5px'>JEF99</div>
<div class='c' style='left:2070.0px;width:177.0px;top:1594.5px'>ФРАНЦИЯ</div>
<div class='c' style='left:2252.0px;width:177.0px;top:1594.5px'>ПАРИЖ</div>
<div class='c' style='left:2718.0px;width:247.0px;top:1594.5px'>OHWIX</div>
<div class='rh' style='top:1592.2px;'>52</div>
<div class='c' style='left:80.5px;width:176.5px;top:1632.5px'>ДУРОВ ПАВЕЛ ВАЛЕРЬЕВИЧ</div>
<div class='c r' style='left:257px;width:176.0px;top:1632.5px'>1984-10-10</div>
<div class='c r' style='left:439px;width:176.0px;top:1632.5px'>649540743</div>
<div class='c r' style='left:628.5px;width:222.5px;top:1632.5px'>2014-02-06</div>
<div class='c' style='left:862.0px;width:177.0px;top:1632.5px'>ВЪЕЗД</div>
<div class='c r' style='left:1039px;width:295.0px;top:1632.5px'>2016-05-05 20:51:50</div>
<div class='c' style='left:1346.0px;width:251.0px;top:1632.5px'>САНКТ-ПЕТЕРБУРГ</div>
<div class='c' style='left:1602.0px;width:281.0px;top:1632.5px'>ПОЛЁТ</div>
<div class='c' style='left:1888.0px;width:177.0px;top:1632.5px'>LH 1438</div>
<div class='c' style='left:2070.0px;width:177.0px;top:1632.5px'>ГЕРМАНИЯ</div>
<div class='c' style='left:2252.0px;width:177.0px;top:1632.5px'>ФРАНКФУРТ-НА-МАЙНЕ</div>
<div class='c' style='left:2434.0px;width:279.0px;top:1632.5px'>ЛЮФТГАНЗА</div>
<div class='rh' style='top:1630.2px;'>53</div>
<div class='c' style='left:80.5px;width:176.5px;top:1670.5px'>ДУРОВ ПАВЕЛ ВАЛЕРЬЕВИЧ</div>
<div class='c r' style='left:257px;width:176.0px;top:1670.5px'>1984-10-10</div>
<div class='c r' style='left:439px;width:176.0px;top:1670.5px'>649540743</div>
<div class='c r' style='left:628.5px;width:222.5px;top:1670.5px'>2014-02-06</div>
<div class='c' style='left:862.0px;width:177.0px;top:1670.5px'>ВЪЕЗД</div>
<div class='c r' style='left:1039px;width:295.0px;top:1670.5px'>2016-05-05 20:51:50</div>
<div class='c' style='left:1346.0px;width:251.0px;top:1670.5px'>САНКТ-ПЕТЕРБУРГ</div>
<div class='c' style='left:1602.0px;width:281.0px;top:1670.5px'>ПОЛЁТ</div>
<div class='c' style='left:1888.0px;width:177.0px;top:1670.5px'>LH 1438</div>
<div class='c' style='left:2070.0px;width:177.0px;top:1670.5px'>ГЕРМАНИЯ</div>
<div class='c' style='left:2252.0px;width:177.0px;top:1670.5px'>ФРАНКФУРТ-НА-МАЙНЕ</div>
<div class='c' style='left:2434.0px;width:279.0px;top:1670.5px'>ЛЮФТГАНЗА</div>
<div class='c' style='left:2718.0px;width:247.0px;top:1670.5px'>DA-IZW</div>
<div class='rh' style='top:1668.2px;'>54</div>
<div class='c' style='left:80.5px;width:176.5px;top:1708.5px'>ДУРОВ ПАВЕЛ ВАЛЕРЬЕВИЧ</div>
<div class='c r' style='left:257px;width:176.0px;top:1708.5px'>1984-10-10</div>
<div class='c r' style='left:439px;width:176.0px;top:1708.5px'>649540743</div>
<div class='c r' style='left:628.5px;width:222.5px;top:1708.5px'>2014-02-06</div>
<div class='c' style='left:862.0px;width:177.0px;top:1708.5px'>ВЪЕЗД</div>
<div class='c r' style='left:1039px;width:295.0px;top:1708.5px'>2016-06-12 21:26:17</div>
<div class='c' style='left:1346.0px;width:251.0px;top:1708.5px'>САНКТ-ПЕТЕРБУРГ</div>
<div class='c' style='left:1602.0px;width:281.0px;top:1708.5px'>ПОЛЁТ</div>
<div class='c' style='left:1888.0px;width:177.0px;top:1708.5px'>LH 1438</div>
<div class='c' style='left:2070.0px;width:177.0px;top:1708.5px'>ГЕРМАНИЯ</div>
<div class='c' style='left:2252.0px;width:177.0px;top:1708.5px'>ФРАНКФУРТ-НА-МАЙНЕ</div>
<div class='c' style='left:2434.0px;width:279.0px;top:1708.5px'>ЛЮФТГАНЗА</div>
<div class='rh' style='top:1706.2px;'>55</div>
<div class='c' style='left:80.5px;width:176.5px;top:1746.5px'>ДУРОВ ПАВЕЛ ВАЛЕРЬЕВИЧ</div>
<div class='c r' style='left:257px;width:176.0px;top:1746.5px'>1984-10-10</div>
<div class='c r' style='left:439px;width:176.0px;top:1746.5px'>649540743</div>
<div class='c r' style='left:628.5px;width:222.5px;top:1746.5px'>2014-02-06</div>
<div class='c' style='left:862.0px;width:177.0px;top:1746.5px'>ВЪЕЗД</div>
<div class='c r' style='left:1039px;width:295.0px;top:1746.5px'>2016-06-12 21:26:17</div>
<div class='c' style='left:1346.0px;width:251.0px;top:1746.5px'>САНКТ-ПЕТЕРБУРГ</div>
<div class='c' style='left:1602.0px;width:281.0px;top:1746.5px'>ПОЛЁТ</div>
<div class='c' style='left:1888.0px;width:177.0px;top:1746.5px'>LH 1438</div>
<div class='c' style='left:2070.0px;width:177.0px;top:1746.5px'>ГЕРМАНИЯ</div>
<div class='c' style='left:2252.0px;width:177.0px;top:1746.5px'>ФРАНКФУРТ-НА-МАЙНЕ</div>
<div class='c' style='left:2434.0px;width:279.0px;top:1746.5px'>ЛЮФТГАНЗА</div>
<div class='c' style='left:2718.0px;width:247.0px;top:1746.5px'>D-AIZO</div>
<div class='rh' style='top:1744.2px;'>56</div>
<div class='c' style='left:80.5px;width:176.5px;top:1784.5px'>ДУРОВ ПАВЕЛ ВАЛЕРЬЕВИЧ</div>
<div class='c r' style='left:257px;width:176.0px;top:1784.5px'>1984-10-10</div>
<div class='c r' style='left:439px;width:176.0px;top:1784.5px'>649540743</div>
<div class='c r' style='left:628.5px;width:222.5px;top:1784.5px'>2014-02-06</div>
<div class='c' style='left:862.0px;width:177.0px;top:1784.5px'>ВЪЕЗД</div>
<div class='c r' style='left:1039px;width:295.0px;top:1784.5px'>2016-12-28 16:16:14</div>
<div class='c' style='left:1346.0px;width:251.0px;top:1784.5px'>САНКТ-ПЕТЕРБУРГ</div>
<div class='c' style='left:1602.0px;width:281.0px;top:1784.5px'>ПОЛЁТ</div>
<div class='c' style='left:1888.0px;width:177.0px;top:1784.5px'>EK 175</div>
<div class='c' style='left:2070.0px;width:177.0px;top:1784.5px'>ОБЪЕДИНЕННЫЕ АРАБСКИЕ ЭМИРАТЫ</div>
<div class='c' style='left:2252.0px;width:177.0px;top:1784.5px'>ДУБАИ</div>
<div class='c' style='left:2434.0px;width:279.0px;top:1784.5px'>АВИАЛИНИИ ОАЭ</div>
<div class='c' style='left:2718.0px;width:247.0px;top:1784.5px'>A6EGT</div>
<div class='rh' style='top:1782.2px;'>57</div>
<div class='c' style='left:80.5px;width:176.5px;top:1822.5px'>ДУРОВ ПАВЕЛ ВАЛЕРЬЕВИЧ</div>
<div class='c r' style='left:257px;width:176.0px;top:1822.5px'>1984-10-10</div>
<div class='c r' style='left:439px;width:176.0px;top:1822.5px'>649540743</div>
<div class='c r' style='left:628.5px;width:222.5px;top:1822.5px'>2014-02-06</div>
<div class='c' style='left:862.0px;width:177.0px;top:1822.5px'>ВЪЕЗД</div>
<div class='c r' style='left:1039px;width:295.0px;top:1822.5px'>2016-03-08 20:52:06</div>
<div class='c' style='left:1346.0px;width:251.0px;top:1822.5px'>САНКТ-ПЕТЕРБУРГ</div>
<div class='c' style='left:1602.0px;width:281.0px;top:1822.5px'>ПОЛЁТ</div>
<div class='c' style='left:1888.0px;width:177.0px;top:1822.5px'>JDI 20B</div>
<div class='c' style='left:2070.0px;width:177.0px;top:1822.5px'>ФРАНЦИЯ</div>
<div class='c' style='left:2252.0px;width:177.0px;top:1822.5px'>ПАРИЖ</div>
<div class='c' style='left:2434.0px;width:279.0px;top:1822.5px'>JET STORE</div>
<div class='c' style='left:2718.0px;width:247.0px;top:1822.5px'>SP-ZSZ</div>
<div class='rh' style='top:1820.2px;'>58</div>
<div class='c' style='left:80.5px;width:176.5px;top:1860.5px'>ДУРОВ ПАВЕЛ ВАЛЕРЬЕВИЧ</div>
<div class='c r' style='left:257px;width:176.0px;top:1860.5px'>1984-10-10</div>
<div class='c r' style='left:439px;width:176.0px;top:1860.5px'>649540743</div>
<div class='c r' style='left:628.5px;width:222.5px;top:1860.5px'>2014-02-06</div>
<div class='c' style='left:862.0px;width:177.0px;top:1860.5px'>ВЪЕЗД</div>
<div class='c r' style='left:1039px;width:295.0px;top:1860.5px'>2016-04-11 15:10:30</div>
<div class='c' style='left:1346.0px;width:251.0px;top:1860.5px'>САНКТ-ПЕТЕРБУРГ</div>
<div class='c' style='left:1602.0px;width:281.0px;top:1860.5px'>ПОЛЁТ</div>
<div class='c' style='left:1888.0px;width:177.0px;top:1860.5px'>EK 175</div>
<div class='c' style='left:2070.0px;width:177.0px;top:1860.5px'>ОБЪЕДИНЕННЫЕ АРАБСКИЕ ЭМИРАТЫ</div>
<div class='c' style='left:2252.0px;width:177.0px;top:1860.5px'>ДУБАИ</div>
<div class='c' style='left:2434.0px;width:279.0px;top:1860.5px'>АВИАЛИНИИ ОАЭ</div>
<div class='rh' style='top:1858.2px;'>59</div>
<div class='rh' style='top:299.5px'>1</div>
<div class='h1' style='left:80.0px;width:141.0px'>ФИО</div>
<svg class='a' style='left:226.5px;top:310.8px' width='22' height='16' viewBox='0 0 22 16'><g fill='#34a04b'><rect x='0' y='0.6' width='21.5' height='1.7'/><rect x='4.8' y='6.9' width='12' height='1.7'/><rect x='9' y='13' width='3.8' height='1.8'/></g></svg>
<div class='h1' style='left:262.0px;width:141.0px'>Дата рождения</div>
<svg class='a' style='left:408.5px;top:310.8px' width='22' height='16' viewBox='0 0 22 16'><g fill='#34a04b'><rect x='0' y='0.6' width='21.5' height='1.7'/><rect x='4.8' y='6.9' width='12' height='1.7'/><rect x='9' y='13' width='3.8' height='1.8'/></g></svg>
<div class='h1' style='left:444.0px;width:141.0px'>Паспорт</div>
<svg class='a' style='left:590.5px;top:310.8px' width='22' height='16' viewBox='0 0 22 16'><g fill='#34a04b'><rect x='0' y='0.6' width='21.5' height='1.7'/><rect x='4.8' y='6.9' width='12' height='1.7'/><rect x='9' y='13' width='3.8' height='1.8'/></g></svg>
<div class='h1' style='left:633.5px;width:187.5px'>Дата выдачи документа</div>
<svg class='a' style='left:826.5px;top:310.8px' width='22' height='16' viewBox='0 0 22 16'><g fill='#34a04b'><rect x='0' y='0.6' width='21.5' height='1.7'/><rect x='4.8' y='6.9' width='12' height='1.7'/><rect x='9' y='13' width='3.8' height='1.8'/></g></svg>
<div class='h1' style='left:862.0px;width:141.0px'>Тип пересечения</div>
<svg class='a' style='left:1008.5px;top:310.8px' width='22' height='16' viewBox='0 0 22 16'><g fill='#34a04b'><rect x='0' y='0.6' width='21.5' height='1.7'/><rect x='4.8' y='6.9' width='12' height='1.7'/><rect x='9' y='13' width='3.8' height='1.8'/></g></svg>
<div class='h1' style='left:1044.0px;width:261.0px'>Дата пересечения</div>
<svg class='a' style='left:1310.5px;top:310.8px' width='22' height='16' viewBox='0 0 22 16'><g fill='#34a04b'><rect x='0' y='0.6' width='21.5' height='1.7'/><rect x='4.8' y='6.9' width='12' height='1.7'/><rect x='9' y='13' width='3.8' height='1.8'/></g></svg>
<div class='h1' style='left:1346.0px;width:215.0px'>Пункт пересечения</div>
<svg class='a' style='left:1566.5px;top:310.8px' width='22' height='16' viewBox='0 0 22 16'><g fill='#34a04b'><rect x='0' y='0.6' width='21.5' height='1.7'/><rect x='4.8' y='6.9' width='12' height='1.7'/><rect x='9' y='13' width='3.8' height='1.8'/></g></svg>
<div class='h1' style='left:1602.0px;width:245.0px'>Тип пересечения</div>
<svg class='a' style='left:1852.5px;top:310.8px' width='22' height='16' viewBox='0 0 22 16'><g fill='#34a04b'><rect x='0' y='0.6' width='21.5' height='1.7'/><rect x='4.8' y='6.9' width='12' height='1.7'/><rect x='9' y='13' width='3.8' height='1.8'/></g></svg>
<div class='h1' style='left:1888.0px;width:141.0px'>Номер рейса</div>
<svg class='a' style='left:2034.5px;top:310.8px' width='22' height='16' viewBox='0 0 22 16'><g fill='#34a04b'><rect x='0' y='0.6' width='21.5' height='1.7'/><rect x='4.8' y='6.9' width='12' height='1.7'/><rect x='9' y='13' width='3.8' height='1.8'/></g></svg>
<div class='h1' style='left:2070.0px;width:141.0px'>Страна</div>
<svg class='a' style='left:2216.5px;top:310.8px' width='22' height='16' viewBox='0 0 22 16'><g fill='#34a04b'><rect x='0' y='0.6' width='21.5' height='1.7'/><rect x='4.8' y='6.9' width='12' height='1.7'/><rect x='9' y='13' width='3.8' height='1.8'/></g></svg>
<div class='h1' style='left:2252.0px;width:141.0px'>Город</div>
<svg class='a' style='left:2398.5px;top:310.8px' width='22' height='16' viewBox='0 0 22 16'><g fill='#34a04b'><rect x='0' y='0.6' width='21.5' height='1.7'/><rect x='4.8' y='6.9' width='12' height='1.7'/><rect x='9' y='13' width='3.8' height='1.8'/></g></svg>
<div class='h1' style='left:2434.0px;width:243.0px'>Компания перевозчик</div>
<svg class='a' style='left:2682.5px;top:310.8px' width='22' height='16' viewBox='0 0 22 16'><g fill='#34a04b'><rect x='0' y='0.6' width='21.5' height='1.7'/><rect x='4.8' y='6.9' width='12' height='1.7'/><rect x='9' y='13' width='3.8' height='1.8'/></g></svg>
<div class='h1' style='left:2718.0px;width:211.0px'>Номер транспортного средства</div>
<svg class='a' style='left:2934.5px;top:310.8px' width='22' height='16' viewBox='0 0 22 16'><g fill='#34a04b'><rect x='0' y='0.6' width='21.5' height='1.7'/><rect x='4.8' y='6.9' width='12' height='1.7'/><rect x='9' y='13' width='3.8' height='1.8'/></g></svg>
<div class='ch' style='left:74px;width:182px;'>A</div>
<div class='ch' style='left:256px;width:182px;'>B</div>
<div class='ch' style='left:438px;width:182px;'>C</div>
<div class='ch' style='left:627.5px;width:228.5px;'>D</div>
<div class='ch' style='left:856px;width:182px;'>E</div>
<div class='ch' style='left:1038px;width:302px;'>F</div>
<div class='ch' style='left:1340px;width:256px;'>G</div>
<div class='ch' style='left:1596px;width:286px;'>H</div>
<div class='ch' style='left:1882px;width:182px;'>I</div>
<div class='ch' style='left:2064px;width:182px;'>J</div>
<div class='ch' style='left:2246px;width:182px;'>K</div>
<div class='ch' style='left:2428px;width:284px;'>L</div>
<div class='ch' style='left:2712px;width:252px;'>M</div>
<div class='ch' style='left:2964px;width:182px;font-weight:normal;color:#3f4443;font-size:19px;'>N</div>
<div class='a' style='left:0;top:336px;width:3198px;height:8px;background:#c8c8c8'></div>
<div class='a' style='left:621px;top:256px;width:6.600000000000023px;height:1640px;background:#c8c8c8'></div>
<div class='a' style='left:74px;top:716px;width:2889px;height:39px;background:rgba(60,100,220,0.095)'></div>
<div class='a' style='left:74px;top:715.9px;width:2890.3px;height:1.6px;background:#3b6fd8'></div>
<div class='a' style='left:74px;top:753.8px;width:2890px;height:1.6px;background:#3b6fd8'></div>
<div class='a' style='left:73.3px;top:715.6px;width:183.6px;height:40.6px;border:2.3px solid #3b6fd6'></div>
<div class='a' style='left:2954.9px;top:747.0px;width:17.2px;height:17.2px;border-radius:50%;background:#2b53c5;border:1px solid #fff'></div>
<div class='a' style='left:621px;top:714px;width:6.600000000000023px;height:44px;background:#c8c8c8'></div>
<div class='a' style='left:0;top:0;width:3218px;height:2px;background:#3b3b3b'></div>
<svg class='a' style='left:31px;top:30.500px' width='45.300' height='62' viewBox='0 0 46 63'>
<path d='M3.200 0 H30 L46 16 V59.300 a3.200 3.200 0 0 1 -3.200 3.200 H3.200 A3.200 3.200 0 0 1 0 59.300 V3.200 A3.200 3.200 0 0 1 3.200 0 Z' fill='#52b557'/>
<path d='M30 0 L46 16 H33 a3 3 0 0 1 -3 -3 Z' fill='#3e9142'/>
<path d='M8.100 24.800 H37.600 V46.300 H8.100 Z M11.100 27.900 V34 H21.100 V27.900 Z M24.600 27.900 V34 H34.500 V27.900 Z M11.100 37.200 V43.100 H21.100 V37.200 Z M24.600 37.200 V43.100 H34.500 V37.200 Z' fill='#ffffff' fill-rule='evenodd'/>
</svg>
<span class='t' style='left:102.20px;top:22.57px;font-size:32.4px;font-weight:normal;color:#1f1f1f;letter-spacing:-0.324px;-webkit-text-stroke:0.5px #1f1f1f;'>ДУРОВ_граница</span>
<svg class='a' style='left:378px;top:23.7px' width='34' height='34' viewBox='0 0 24 24'><path d='M22 9.24l-7.19-.62L12 2 9.19 8.63 2 9.24l5.46 4.73L5.82 21 12 17.27 18.18 21l-1.63-7.03L22 9.24zM12 15.4l-3.76 2.27 1-4.28-3.32-2.88 4.38-.38L12 6.1l1.71 4.04 4.38.38-3.32 2.88 1 4.28L12 15.4z' fill='#444746' stroke='#444746' stroke-width='0.55' stroke-linejoin='miter'/></svg>
<svg class='a' style='left:436px;top:24px' width='34' height='34' viewBox='0 0 24 24'><path d='M20 6h-8l-2-2H4c-1.1 0-2 .9-2 2v12c0 1.1.9 2 2 2h16c1.1 0 2-.9 2-2V8c0-1.1-.9-2-2-2zm0 12H4V6h5.17l2 2H20v10zm-8.01-9l-1.41 1.41L12.16 12H8v2h4.16l-1.59 1.59L11.99 17 16 13.01 11.99 9z' fill='#444746' /></svg>
<svg class='a' style='left:436px;top:24px' width='34' height='34' viewBox='0 0 24 24'><path d='M2.600 5 H9.700 L11.900 7.300 H2.600 Z' fill='#444746' /></svg>
<svg class='a' style='left:494px;top:24.5px' width='32.5' height='32.5' viewBox='0 0 24 24'><path d='M19.35 10.04C18.67 6.59 15.64 4 12 4 9.11 4 6.6 5.64 5.35 8.04 2.34 8.36 0 10.91 0 14c0 3.31 2.69 6 6 6h13c2.76 0 5-2.24 5-5 0-2.64-2.05-4.78-4.65-4.96zM19 18H6c-2.21 0-4-1.79-4-4 0-2.05 1.53-3.76 3.56-3.97l1.07-.11.5-.95C8.08 7.14 9.94 6 12 6c2.62 0 4.88 1.86 5.39 4.43l.3 1.5 1.53.11c1.56.1 2.78 1.41 2.78 2.96 0 1.65-1.35 3-3 3zm-9-3.82l-2.09-2.09L6.5 13.5 10 17l6.01-6.01-1.41-1.41z' fill='#444746' /></svg>
<span class='t' style='left:103.00px;top:70.67px;font-size:25.2px;font-weight:normal;color:#1f1f1f;letter-spacing:-0.131px;-webkit-text-stroke:0.55px #1f1f1f;'>File</span>
<span class='t' style='left:171.20px;top:70.67px;font-size:25.2px;font-weight:normal;color:#1f1f1f;letter-spacing:0.165px;-webkit-text-stroke:0.55px #1f1f1f;'>Edit</span>
<span class='t' style='left:243.30px;top:70.67px;font-size:25.2px;font-weight:normal;color:#1f1f1f;letter-spacing:0.120px;-webkit-text-stroke:0.55px #1f1f1f;'>View</span>
<span class='t' style='left:325.50px;top:70.67px;font-size:25.2px;font-weight:normal;color:#1f1f1f;letter-spacing:0.860px;-webkit-text-stroke:0.55px #1f1f1f;'>Insert</span>
<span class='t' style='left:421.00px;top:70.67px;font-size:25.2px;font-weight:normal;color:#1f1f1f;letter-spacing:0.544px;-webkit-text-stroke:0.55px #1f1f1f;'>Format</span>
<span class='t' style='left:531.70px;top:70.67px;font-size:25.2px;font-weight:normal;color:#1f1f1f;letter-spacing:0.194px;-webkit-text-stroke:0.55px #1f1f1f;'>Data</span>
<span class='t' style='left:613.30px;top:70.67px;font-size:25.2px;font-weight:normal;color:#1f1f1f;letter-spacing:0.847px;-webkit-text-stroke:0.55px #1f1f1f;'>Tools</span>
<span class='t' style='left:702.50px;top:70.67px;font-size:25.2px;font-weight:normal;color:#1f1f1f;letter-spacing:0.287px;-webkit-text-stroke:0.55px #1f1f1f;'>Extensions</span>
<span class='t' style='left:855.80px;top:70.67px;font-size:25.2px;font-weight:normal;color:#1f1f1f;letter-spacing:0.729px;-webkit-text-stroke:0.55px #1f1f1f;'>Help</span>
<svg class='a' style='left:2673.8px;top:31.2px' width='49.3' height='49.3' viewBox='0 -960 960 960'><path d='M480-120q-138 0-240.500-91.500T122-440h82q14 104 92.500 172T480-200q117 0 198.500-81.500T760-480q0-117-81.500-198.500T480-760q-69 0-129 32t-101 88h110v80H120v-240h80v94q51-64 124.500-99T480-840q75 0 140.500 28.500t114 77q48.500 48.500 77 114T840-480q0 75-28.500 140.500t-77 114q-48.500 48.500-114 77T480-120Zm112-192L440-464v-216h80v184l128 128-56 56Z' fill='#444746'/></svg>
<svg class='a' style='left:2764px;top:35px' width='44.5' height='44.5' viewBox='0 0 24 24'><path d='M21.99 4c0-1.1-.89-2-1.99-2H4c-1.1 0-2 .9-2 2v12c0 1.1.9 2 2 2h14l4 4-.01-18zM20 4v13.17L18.83 16H4V4h16zM6 12h12v2H6zm0-3h12v2H6zm0-3h12v2H6z' fill='#444746' /></svg>
<svg class='a' style='left:2864px;top:42px' width='40' height='31' viewBox='0 0 40 31'>
<path d='M9.5 2.2 H24.5 a4 4 0 0 1 4 4 V24.5 a4 4 0 0 1 -4 4 H6 a4 4 0 0 1 -4 -4 V9.7 Z' fill='none' stroke='#444746' stroke-width='4' stroke-linejoin='round'/>
<path d='M28.5 14 L37.5 6 V25 L28.5 17 Z' fill='#444746'/></svg>
<svg class='a' style='left:0;top:0' width='1' height='1'><path d='M2921 51.5 H2935.5 L2928.25 59 Z' fill='#444746'/></svg>
<div class='a' style='left:2975.5px;top:20px;width:223px;height:72px;border-radius:36px;background:#c9e6fb'></div>
<div class='a' style='left:3136px;top:20px;width:1.8px;height:72px;background:#f2f8fd'></div>
<svg class='a' style='left:3004px;top:36.8px' width='35.5' height='35.5' viewBox='0 0 24 24'><path d='M9 13.75c-2.34 0-7 1.17-7 3.5V19h14v-1.75c0-2.33-4.66-3.5-7-3.5zM4.34 17c.84-.58 2.87-1.25 4.66-1.25s3.82.67 4.66 1.25H4.34zM9 12c1.93 0 3.5-1.57 3.5-3.5S10.930 5 9 5 5.5 6.57 5.5 8.5 7.07 12 9 12zm0-5c.83 0 1.5.67 1.5 1.5S9.83 10 9 10s-1.500-.67-1.500-1.500S8.17 7 9 7zm7.040 6.810c1.160.84 1.960 1.960 1.960 3.440V19h4v-1.750c0-2.020-3.500-3.170-5.960-3.440zM15 12c1.930 0 3.500-1.570 3.500-3.500S16.930 5 15 5c-.54 0-1.040.13-1.500.35.630.89 1 1.980 1 3.150s-.37 2.260-1 3.150c.46.220.96.350 1.500.350z' fill='#001d35' /></svg>
<span class='t' style='left:3052.30px;top:43.30px;font-size:25.4px;font-weight:normal;color:#001d35;letter-spacing:0.784px;-webkit-text-stroke:0.7px #001d35;'>Share</span>
<svg class='a' style='left:0;top:0' width='1' height='1'><path d='M3161 52.8 H3175.5 L3168.25 60.2 Z' fill='#001d35'/></svg>
<div class='a' style='left:21px;top:118.8px;width:3170px;height:72px;border-radius:36px;background:#edf2fa'></div>
<div class='a' style='left:37px;top:129px;width:180px;height:50px;border-radius:25px;background:#fff'></div>
<svg class='a' style='left:51.5px;top:137.5px' width='34.5' height='34.5' viewBox='0 0 24 24'><path d='M15.5 14h-.79l-.28-.27C15.41 12.59 16 11.11 16 9.5 16 5.91 13.09 3 9.5 3S3 5.91 3 9.5 5.91 16 9.5 16c1.61 0 3.09-.59 4.23-1.57l.27.28v.79l5 4.99L20.49 19l-4.990-5zm-6 0C7.010 14 5 11.990 5 9.500S7.010 5 9.500 5 14 7.010 14 9.500 11.990 14 9.500 14z' fill='#444746' /></svg>
<span class='t' style='left:100.00px;top:141.81px;font-size:24.2px;font-weight:normal;color:#444746;letter-spacing:1.848px;-webkit-text-stroke:0.3px #444746;'>Menus</span>
<svg class='a' style='left:234px;top:143px' width='26' height='26' viewBox='0 0 26 26'><path d='M4.300 9.800 H16.300 a5.850 5.850 0 0 1 0 11.700 H5.300' fill='none' stroke='#444746' stroke-width='3'/><path d='M10.600 3.500 L4.300 9.800 L10.600 16.100' fill='none' stroke='#444746' stroke-width='3'/></svg>
<svg class='a' style='left:289.700px;top:143px' width='26' height='26' viewBox='0 0 26 26'><g transform='translate(26,0) scale(-1,1)'><path d='M4.300 9.800 H16.300 a5.850 5.850 0 0 1 0 11.700 H5.300' fill='none' stroke='#444746' stroke-width='3'/><path d='M10.600 3.500 L4.300 9.800 L10.600 16.100' fill='none' stroke='#444746' stroke-width='3'/></g></svg>
<svg class='a' style='left:341.6px;top:138.7px' width='34.3' height='34.3' viewBox='0 0 24 24'><path d='M19 8h-1V3H6v5H5c-1.660 0-3 1.340-3 3v6h4v4h12v-4h4v-6c0-1.660-1.340-3-3-3zM8 5h8v3H8V5zm8 12v2H8v-4h8v2zm2-2v-2H6v2H4v-4c0-.550.450-1 1-1h14c.550 0 1 .450 1 1v4h-2z' fill='#444746' /></svg>
<div class='a' style='left:366.300px;top:153.700px;width:2.800px;height:2.800px;border-radius:50%;background:#444746'></div>
<svg class='a' style='left:400px;top:139px' width='28' height='34' viewBox='0 0 28 34'>
<rect x='8.100' y='2.600' width='16.200' height='5.900' rx='1.800' fill='none' stroke='#444746' stroke-width='2.600'/>
<path d='M8 5.500 H4.300 a2 2 0 0 0 -2 2 V13.200 a2 2 0 0 0 2 2 H14.700 a2 2 0 0 1 2 2 V22' fill='none' stroke='#444746' stroke-width='2.600'/>
<rect x='12.550' y='23.150' width='6' height='7.400' rx='1.300' fill='none' stroke='#444746' stroke-width='2.500'/></svg>
<span class='t' style='left:456.50px;top:141.67px;font-size:25.2px;font-weight:normal;color:#444746;letter-spacing:1.193px;-webkit-text-stroke:0.3px #444746;'>100%</span>
<svg class='a' style='left:0;top:0' width='1' height='1'><path d='M548 151.5 H563 L555.5 159 Z' fill='#444746'/></svg>
<div class='a' style='left:585.4px;top:137.5px;width:1.3px;height:35px;background:#c7c7c7'></div>
<span class='t' style='left:612.50px;top:140.84px;font-size:25px;font-weight:normal;color:#444746;letter-spacing:0.094px;-webkit-text-stroke:0.3px #444746;'>£</span>
<span class='t' style='left:665.00px;top:140.84px;font-size:25px;font-weight:normal;color:#444746;letter-spacing:-1.234px;-webkit-text-stroke:0.3px #444746;'>%</span>
<span class='t' style='left:716.00px;top:139.65px;font-size:20.5px;font-weight:bold;color:#444746;letter-spacing:1.391px;transform:scaleY(1.15);transform-origin:0 84.650%;'>.0</span>
<svg class='a' style='left:731px;top:158px' width='16' height='13' viewBox='0 0 16 13'><path d='M15 6.500 H3 M7.300 1.800 L2.600 6.500 L7.300 11.200' fill='none' stroke='#444746' stroke-width='2.800'/></svg>
<span class='t' style='left:771.50px;top:139.65px;font-size:20.5px;font-weight:bold;color:#444746;letter-spacing:1.500px;transform:scaleY(1.15);transform-origin:0 84.650%;'>.00</span>
<svg class='a' style='left:787px;top:158px' width='16' height='13' viewBox='0 0 16 13'><path d='M1 6.500 H13 M8.700 1.800 L13.400 6.500 L8.700 11.200' fill='none' stroke='#444746' stroke-width='2.800'/></svg>
<span class='t' style='left:828.30px;top:143.12px;font-size:22.3px;font-weight:normal;color:#444746;letter-spacing:-1.652px;-webkit-text-stroke:0.3px #444746;'>123</span>
<div class='a' style='left:880.1999999999999px;top:137.5px;width:1.3px;height:35px;background:#c7c7c7'></div>
<span class='t' style='left:907.00px;top:140.67px;font-size:25.2px;font-weight:normal;color:#444746;letter-spacing:0.523px;-webkit-text-stroke:0.3px #444746;'>Defaul...</span>
<svg class='a' style='left:0;top:0' width='1' height='1'><path d='M1029 150.2 H1043.5 L1036.25 157.6 Z' fill='#444746'/></svg>
<div class='a' style='left:1068.9px;top:137.5px;width:1.3px;height:35px;background:#c7c7c7'></div>
<div class='a' style='left:1090px;top:153.5px;width:17.5px;height:2px;background:#444746'></div>
<div class='a' style='left:1125.7px;top:133px;width:59.5px;height:41.5px;border:1.4px solid #505351;border-radius:8px'></div>
<span class='t' style='left:1141.00px;top:141.67px;font-size:25.2px;font-weight:normal;color:#444746;letter-spacing:-0.031px;-webkit-text-stroke:0.3px #444746;'>10</span>
<div class='a' style='left:1202px;top:153.9px;width:18px;height:2.3px;background:#444746'></div>
<div class='a' style='left:1209.9px;top:146px;width:2.3px;height:18px;background:#444746'></div>
<div class='a' style='left:1240.9px;top:137.5px;width:1.3px;height:35px;background:#c7c7c7'></div>
<span class='t' style='left:1265.20px;top:141.57px;font-size:26.5px;font-weight:bold;color:#444746;letter-spacing:-0.041px;'>B</span>
<svg class='a' style='left:1321.500px;top:144.700px' width='19' height='22.200' viewBox='0 0 19 22.200'><path d='M5.900 0 H18.600 V3.200 H14 L8.500 18.900 H13.500 V22.100 H0.300 V18.900 H5.100 L10.600 3.200 H5.900 Z' fill='#444746'/></svg>
<svg class='a' style='left:1372px;top:143px' width='31' height='24' viewBox='0 0 31 24'>
<path d='M20.700 6.800 C19.800 3.600 17.600 2.600 15.300 2.600 C12.200 2.600 9.900 4.200 9.900 7.200' fill='none' stroke='#444746' stroke-width='2.800'/>
<path d='M9.900 16.200 C10.300 19.600 12.500 21.400 15.300 21.400 C18.300 21.400 20.800 19.800 20.800 16.200' fill='none' stroke='#444746' stroke-width='2.800'/>
<rect x='1' y='9.200' width='28.600' height='2.700' fill='#444746'/></svg>
<span class='t' style='left:1435.20px;top:138.98px;font-size:24px;font-weight:normal;color:#444746;letter-spacing:1.584px;-webkit-text-stroke:0.5px #444746;'>A</span>
<div class='a' style='left:1424px;top:165px;width:42px;height:7px;background:#000'></div>
<div class='a' style='left:1480.2px;top:137.5px;width:1.3px;height:35px;background:#c7c7c7'></div>
<svg class='a' style='left:1497px;top:134.5px' width='33' height='33' viewBox='0 0 24 24'><path d='M16.560 8.940L7.620 0 6.210 1.410l2.380 2.380-5.150 5.150c-.590.590-.590 1.540 0 2.120l5.500 5.500c.290.290.680.440 1.060.440s.770-.150 1.060-.440l5.500-5.500c.590-.580.590-1.530 0-2.120zM5.210 10L10 5.210 14.790 10H5.210zM19 11.500s-2 2.170-2 3.500c0 1.100.900 2 2 2s2-.900 2-2c0-1.330-2-3.500-2-3.500z' fill='#444746' /></svg>
<div class='a' style='left:1496px;top:165px;width:41.5px;height:7px;background:#fff'></div>
<svg class='a' style='left:1562px;top:142.500px' width='27' height='27' viewBox='0 0 27 27'>
<rect x='1.700' y='1.700' width='23.600' height='23.600' fill='none' stroke='#444746' stroke-width='2.700'/>
<path d='M13.500 1.500 V25.500 M1.500 13.500 H25.500' stroke='#444746' stroke-width='2.600'/></svg>
<svg class='a' style='left:1620px;top:142px' width='28' height='27' viewBox='0 0 28 27'>
<path d='M8 1.700 H1.700 V8.500 M8 25.300 H1.700 V18.500 M20 1.700 H26.300 V8.500 M20 25.300 H26.300 V18.500' fill='none' stroke='#444746' stroke-width='2.600'/>
<path d='M1 13.500 H10.500 M7 9.500 L11 13.500 L7 17.500 M27 13.500 H17.500 M21 9.500 L17 13.500 L21 17.500' fill='none' stroke='#444746' stroke-width='2.400'/></svg>
<svg class='a' style='left:0;top:0' width='1' height='1'><path d='M1663 151.2 H1677.5 L1670.25 158.5 Z' fill='#444746'/></svg>
<div class='a' style='left:1687.2px;top:137.5px;width:1.3px;height:35px;background:#c7c7c7'></div>
<svg class='a' style='left:1705px;top:142.500px' width='26' height='26' viewBox='0 0 26 26'>
<path d='M0 1.500 H25.500 M0 8.800 H17.500 M0 16.100 H25.500 M0 23.400 H17.500' stroke='#444746' stroke-width='2.400'/></svg>
<svg class='a' style='left:0;top:0' width='1' height='1'><path d='M1742.5 151.2 H1757.5 L1750.0 158.5 Z' fill='#444746'/></svg>
<svg class='a' style='left:1779px;top:143px' width='23' height='26' viewBox='0 0 23 26'>
<path d='M11.500 0 V17.500 M4.500 11 L11.500 18 L18.500 11' fill='none' stroke='#444746' stroke-width='2.600'/><rect x='0' y='22.800' width='22.500' height='2.500' fill='#444746'/></svg>
<svg class='a' style='left:0;top:0' width='1' height='1'><path d='M1815 151.2 H1830 L1822.5 158.5 Z' fill='#444746'/></svg>
<svg class='a' style='left:1850px;top:144px' width='23' height='23' viewBox='0 0 23 23'>
<path d='M1.500 0 V22.500' stroke='#444746' stroke-width='2.600'/><path d='M12.500 0 V6.500 M12.500 16 V22.500' stroke='#444746' stroke-width='2.600'/>
<path d='M7 11.250 H20 M15.500 6.500 L20.500 11.250 L15.500 16' fill='none' stroke='#444746' stroke-width='2.400'/></svg>
<svg class='a' style='left:0;top:0' width='1' height='1'><path d='M1887 151.2 H1902 L1894.5 158.5 Z' fill='#444746'/></svg>
<span class='t' style='left:1926.40px;top:141.46px;font-size:20.6px;font-weight:bold;color:#444746;letter-spacing:-0.575px;'>A</span>
<svg class='a' style='left:1923px;top:158px' width='26' height='12' viewBox='0 0 26 12'>
<path d='M0.500 5.500 H19' fill='none' stroke='#444746' stroke-width='2.400'/><path d='M18 0.800 L24 5.500 L18 10.200 Z' fill='#444746'/></svg>
<svg class='a' style='left:0;top:0' width='1' height='1'><path d='M1959 151.2 H1974 L1966.5 158.5 Z' fill='#444746'/></svg>
<div class='a' style='left:1986.9px;top:137.5px;width:1.3px;height:35px;background:#c7c7c7'></div>
<svg class='a' style='left:2004.5px;top:137px' width='35.5' height='35.5' viewBox='0 0 24 24'><path d='M3.900 12c0-1.710 1.390-3.100 3.100-3.100h4V7H7c-2.760 0-5 2.240-5 5s2.240 5 5 5h4v-1.900H7c-1.710 0-3.100-1.390-3.100-3.100zM8 13h8v-2H8v2zm9-6h-4v1.900h4c1.710 0 3.100 1.390 3.100 3.100s-1.390 3.100-3.100 3.100h-4V17h4c2.760 0 5-2.240 5-5s-2.240-5-5-5z' fill='#444746' /></svg>
<svg class='a' style='left:2060px;top:137.500px' width='35.500' height='35.500' viewBox='0 0 24 24'><g transform='translate(24,0) scale(-1,1)'><path d='M22 4c0-1.100-.900-2-2-2H4c-1.100 0-2 .900-2 2v12c0 1.100.900 2 2 2h14l4 4V4zm-2 13.170L18.830 16H4V4h16v13.170zM11 5h2v4h4v2h-4v4h-2v-4H7V9h4z' fill='#444746'/></g></svg>
<svg class='a' style='left:2117.5px;top:138.5px' width='34' height='34' viewBox='0 0 24 24'><path d='M19 3H5c-1.100 0-2 .900-2 2v14c0 1.100.900 2 2 2h14c1.100 0 2-.900 2-2V5c0-1.100-.900-2-2-2zm0 16H5V5h14v14zM7 10h2v7H7zm4-3h2v10h-2zm4 6h2v4h-2z' fill='#444746' /></svg>
<div class='a' style='left:2164px;top:128px;width:52px;height:52px;border-radius:8px;background:#d6e2fb'></div>
<svg class='a' style='left:2179px;top:144.500px' width='22' height='23' viewBox='0 0 22 23'>
<path d='M0.300 0 H21.700 L13 11.500 V21 a1.500 1.500 0 0 1 -1.500 1.500 h-1 a1.500 1.500 0 0 1 -1.500 -1.500 V11.500 Z' fill='#0b1d48'/></svg>
<svg class='a' style='left:2227px;top:140.500px' width='30' height='30' viewBox='0 0 30 30'>
<path d='M1.300 20 V4.500 a3.200 3.200 0 0 1 3.200 -3.200 H21' fill='none' stroke='#444746' stroke-width='2.600'/>
<rect x='7.300' y='7.300' width='20.400' height='20.400' rx='2.500' fill='none' stroke='#444746' stroke-width='2.600'/>
<path d='M7 14.200 H28 M7 21 H28 M14.200 14 V28 M21 14 V28' stroke='#444746' stroke-width='2.300'/></svg>
<svg class='a' style='left:0;top:0' width='1' height='1'><path d='M2267.5 151.2 H2282.5 L2275.0 158.5 Z' fill='#444746'/></svg>
<svg class='a' style='left:2311px;top:145px' width='16' height='22' viewBox='0 0 16 22'>
<path d='M15 4.500 V1.500 H1.800 L9 11 L1.800 20.500 H15 V17.500' fill='none' stroke='#444746' stroke-width='2.900' stroke-linejoin='miter'/></svg>
<svg class='a' style='left:3131px;top:148px' width='21' height='14' viewBox='0 0 21 14'><path d='M2 12 L10.500 3.500 L19 12' fill='none' stroke='#444746' stroke-width='2.800'/></svg>
<span class='t' style='left:17.50px;top:219.98px;font-size:22.0px;font-weight:normal;color:#1f1f1f;letter-spacing:0.573px;'>A29:M29</span>
<svg class='a' style='left:0;top:0' width='1' height='1'><path d='M146 226.5 H160.5 L153.25 234 Z' fill='#444746'/></svg>
<div class='a' style='left:181.400px;top:216px;width:1.400px;height:30px;background:#c7c7c7'></div>
<span class='t' style='left:202px;top:214px;font-size:31px;font-style:italic;font-weight:bold;font-family:"Liberation Serif",serif;color:#a3a8a8;letter-spacing:-1.500px'>fx</span>
<span class='t' style='left:244.70px;top:220.30px;font-size:21.5px;font-weight:normal;color:#1f1f1f;letter-spacing:-0.673px;'>ДУРОВ ПАВЕЛ ВАЛЕРЬЕВИЧ</span>
<div class='a' style='left:0;top:1896px;width:619px;height:22px;background:#f8f8f8'></div>
<div class='a' style='left:619px;top:1896.500px;width:7.200px;height:21px;background:#dfe3ec'></div>
<div class='a' style='left:626.200px;top:1896.500px;width:2px;height:21px;background:#fff'></div>
<div class='a' style='left:628px;top:1896.500px;width:1px;height:21px;background:#e8e8e8'></div>
<div class='a' style='left:629px;top:1896px;width:2570px;height:22px;background:#fff'></div>
<div class='a' style='left:630.200px;top:1899px;width:1371px;height:17px;border-radius:8.500px;background:#dadcde'></div>
<div class='a' style='left:0;top:1917.500px;width:3218px;height:1.300px;background:#e3e3e3'></div>
<div class='a' style='left:3143px;top:1896px;width:57px;height:21.500px;background:#fafafa;border-left:1.300px solid #e1e1e1'></div>
<div class='a' style='left:3171px;top:1896px;width:1.300px;height:21.500px;background:#e1e1e1'></div>
<svg class='a' style='left:0;top:0' width='1' height='1'><path d='M3159.500 1902 L3153 1907 L3159.500 1912 Z M3182.500 1902 L3189 1907 L3182.500 1912 Z' fill='#b4b4b4'/></svg>
<div class='a' style='left:3199px;top:256px;width:19px;height:81px;background:#f8f9fa;border-left:1.200px solid #e1e1e1'></div>
<div class='a' style='left:3199px;top:337px;width:19px;height:7px;background:#dfe4ee'></div>
<div class='a' style='left:3199px;top:344px;width:19px;height:1574px;background:#fff'></div>
<div class='a' style='left:3201.500px;top:370px;width:22px;height:59px;border-radius:9px;background:#dadce0'></div>
<div class='a' style='left:3199px;top:1840px;width:19px;height:56px;background:#fafafa;border-top:1.300px solid #e1e1e1;border-left:1.300px solid #e1e1e1'></div>
<div class='a' style='left:3199px;top:1866.300px;width:13px;height:1.300px;background:#9db4e6'></div>
<svg class='a' style='left:0;top:0' width='1' height='1'><path d='M3204.500 1855 L3209.500 1849 L3214.500 1855 Z M3204.500 1879 L3209.500 1885 L3214.500 1879 Z' fill='#b4b4b4'/></svg>
<div class='a' style='left:92.500px;top:1950.600px;width:18.500px;height:2.300px;background:#444746'></div>
<div class='a' style='left:100.600px;top:1942.500px;width:2.300px;height:18.500px;background:#444746'></div>
<div class='a' style='left:159.500px;top:1944.2px;width:26px;height:2.300px;background:#444746'></div>
<div class='a' style='left:159.500px;top:1950.9px;width:26px;height:2.300px;background:#444746'></div>
<div class='a' style='left:159.500px;top:1957.6px;width:26px;height:2.300px;background:#444746'></div>
<div class='a' style='left:229px;top:1919px;width:290.500px;height:64.500px;background:#e1e9f7'></div>
<span class='t' style='left:250.30px;top:1940.58px;font-size:24.6px;font-weight:normal;color:#2552c7;letter-spacing:2.138px;-webkit-text-stroke:1.05px #2552c7;'>ДУРОВ_граница</span>
<svg class='a' style='left:0;top:0' width='1' height='1'><path d='M484.5 1949.3 H499 L491.75 1956.5 Z' fill='#2552c7'/></svg>
<div class='a' style='left:3030.500px;top:1925.500px;width:170px;height:53.500px;border-radius:13px;background:#cdf2d6'></div>
<span class='t' style='left:3046.30px;top:1939.51px;font-size:24.2px;font-weight:normal;color:#0c2914;letter-spacing:1.395px;-webkit-text-stroke:0.45px #0c2914;'>Count: 9</span>
<svg class='a' style='left:0;top:0' width='1' height='1'><path d='M3164 1948.3 H3178.5 L3171.25 1955.7 Z' fill='#0c2914'/></svg>
<svg class='a' style='left:0;top:1976px' width='20' height='10' viewBox='0 0 20 10'><path d='M0 4.500 Q5 9 15 10 H0 Z' fill='#000'/></svg>
</div></body></html>
